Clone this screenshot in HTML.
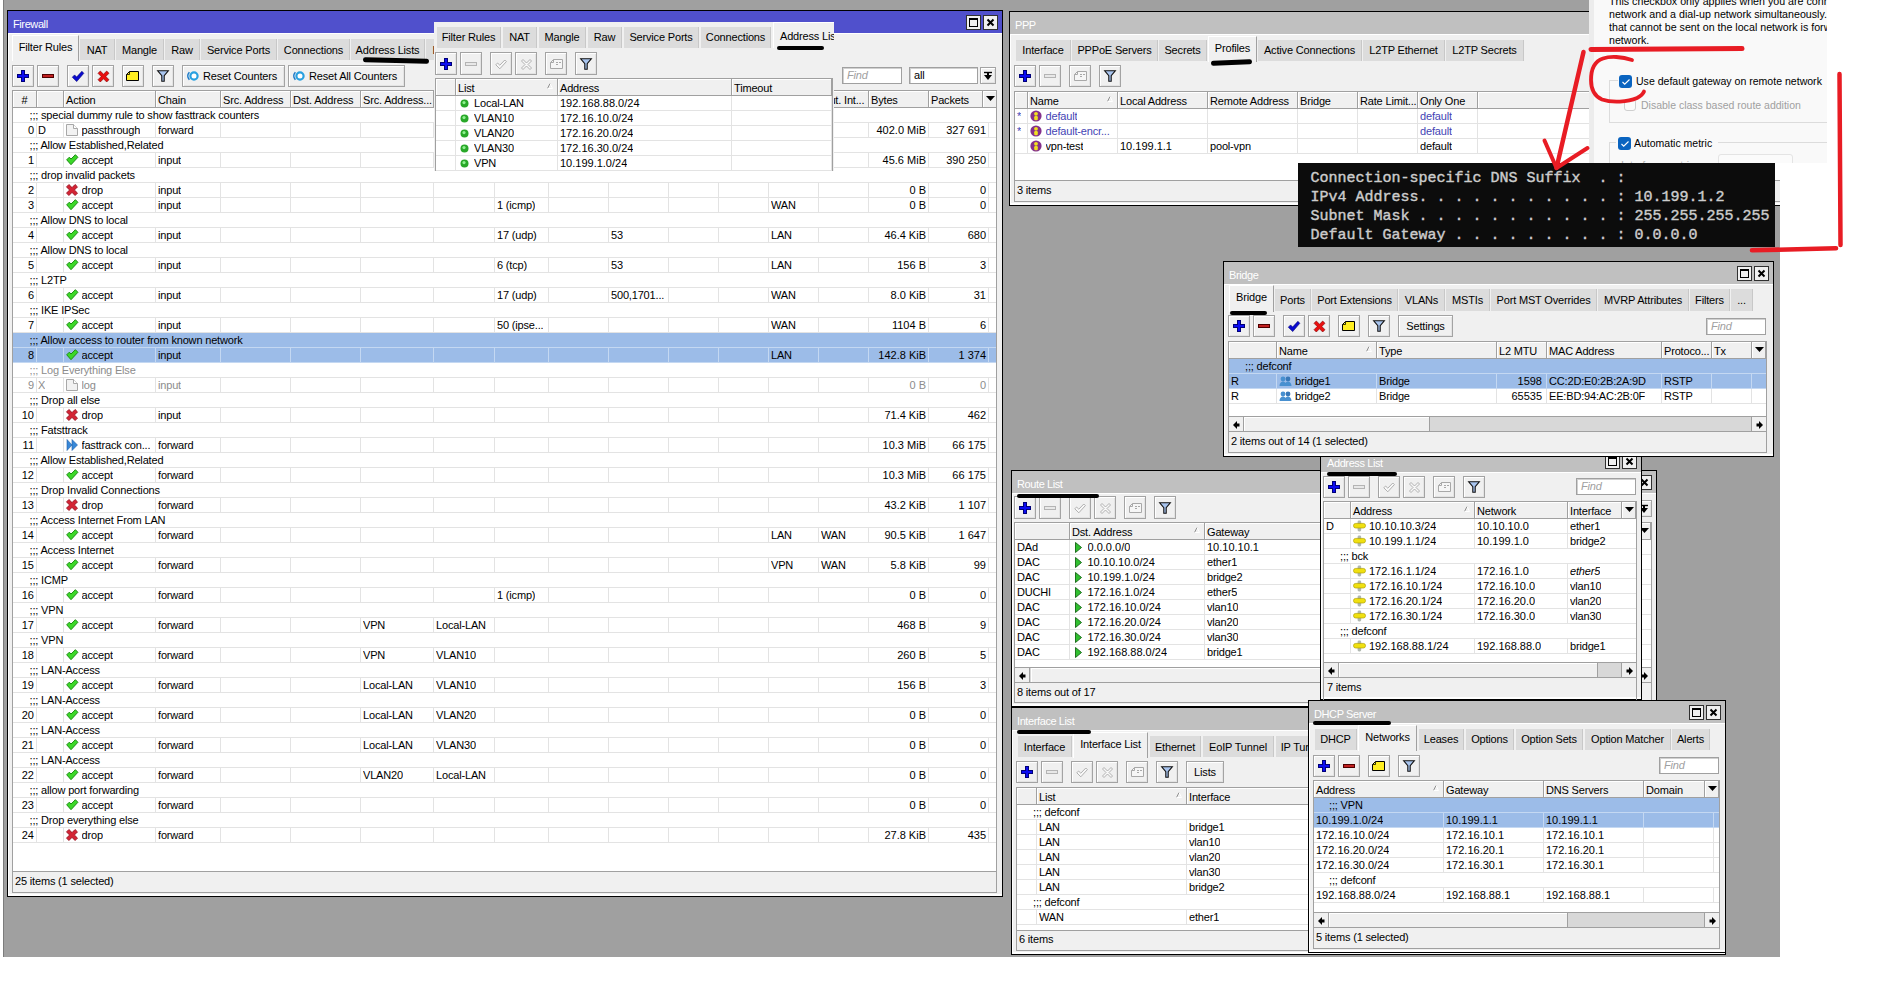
<!DOCTYPE html><html><head><meta charset="utf-8"><title>winbox</title><style>
html,body{margin:0;padding:0}
body{width:1885px;height:991px;background:#fff;position:relative;overflow:hidden;font-family:"Liberation Sans",sans-serif;font-size:11px;color:#000;letter-spacing:-0.17px}
div{position:absolute;box-sizing:border-box}
svg{position:absolute;overflow:visible}
.t{white-space:nowrap;line-height:15px;height:15px}
.n{letter-spacing:0}
.r{text-align:right}
.g{color:#8c8c8c}
.b{background:#f0f0f0;border:1px solid #a3a3a3;box-shadow:inset 1px 1px 0 #fff,inset -1px -1px 0 #e3e3e3}
.w{background:#f0f0f0;border:1px solid #000}
.h{background:#f0f0f0;border-right:1px solid #a0a0a0;border-bottom:1px solid #a0a0a0;box-shadow:inset 1px 1px 0 #fff;white-space:nowrap;overflow:hidden;line-height:18px;padding-left:2px}
.tab{background:#dcdcdc;border-right:1px solid #c8c8c8;white-space:nowrap;text-align:center;line-height:20px}
.tabA{background:#f0f0f0;border-left:1px solid #fff;border-top:1px solid #fff;border-right:1px solid #a0a0a0;white-space:nowrap;text-align:center;line-height:22px}
.tb{background:#fff;border:1px solid #a0a0a0;overflow:hidden}
.row{left:0;height:15px;border-bottom:1px solid #e3e3e3}
.sel{background:#9cbce8;border-bottom:1px solid #c4d8f2}
.vl{top:0;width:1px;background:#e3e3e3}
.fi{background:#fff;border:1px solid #a0a0a0;box-shadow:inset 1px 1px 0 #d0d0d0;line-height:14px;padding-left:4px;white-space:nowrap}
.d{font-size:11.6px;letter-spacing:0;white-space:nowrap;line-height:16px;transform-origin:0 0;color:#000}
.sb{background:#f0f0f0;border-top:1px solid #a0a0a0}
</style></head><body><div style="left:0;top:0;width:1780px;height:957px;overflow:hidden;background:#a0a0a0"><div style="left:0px;top:0px;width:3px;height:957px;background:#fff"></div><div style="left:3px;top:0px;width:1px;height:957px;background:#7c7c7c"></div><div class="w" style="left:7px;top:10px;width:996px;height:887px;"></div><div style="left:8px;top:11px;width:994px;height:22px;background:#5050cc"><div class="t" style="left:5px;top:5.5px;color:#fff;letter-spacing:-.4px">Firewall</div></div><div style="left:8px;top:33px;width:994px;height:1px;background:#fff"></div><div style="left:8px;top:33px;width:1px;height:863px;background:#fff"></div><div style="left:8px;top:894px;width:994px;height:2px;background:#fff"></div><div style="left:966px;top:15px;width:15px;height:15px;background:#f0f0f0;border:1px solid #303030"><svg style="left:2px;top:2px" width="9" height="9" viewBox="0 0 9 9"><rect x=".5" y="1" width="8" height="7.5" fill="none" stroke="#000" stroke-width="1"/><path d="M0 1h9" stroke="#000" stroke-width="2"/></svg></div><div style="left:983px;top:15px;width:15px;height:15px;background:#f0f0f0;border:1px solid #303030"><svg style="left:3px;top:3px" width="7" height="7" viewBox="0 0 7 7"><path d="M.5 .5l6 6M6.5 .5l-6 6" stroke="#000" stroke-width="2"/></svg></div><div class="tabA" style="left:12px;top:35px;width:67px;height:26px">Filter Rules</div><div class="tab" style="left:80px;top:39px;width:35px;height:21px;line-height:22px">NAT</div><div class="tab" style="left:116px;top:39px;width:48px;height:21px;line-height:22px">Mangle</div><div class="tab" style="left:165px;top:39px;width:35px;height:21px;line-height:22px">Raw</div><div class="tab" style="left:201px;top:39px;width:76px;height:21px;line-height:22px">Service Ports</div><div class="tab" style="left:278px;top:39px;width:72px;height:21px;line-height:22px">Connections</div><div class="tab" style="left:351px;top:39px;width:74px;height:21px;line-height:22px">Address Lists</div><div class="tab" style="left:426px;top:39px;width:94px;height:21px;line-height:22px">Layer7 Protocols</div><div class="b" style="left:12px;top:65px;width:22px;height:22px;"><svg style="left:4px;top:4px" width="12" height="12" viewBox="0 0 12 12"><g shape-rendering="crispEdges"><path d="M4 0h4v4h4v4h-4v4h-4v-4h-4v-4h4z" fill="#000078"/><path d="M5 1h2v4h4v2h-4v4h-2v-4h-4v-2h4z" fill="#0c0cf0"/></g></svg></div><div class="b" style="left:37px;top:65px;width:22px;height:22px;"><svg style="left:4px;top:8px" width="12" height="4" viewBox="0 0 12 4"><rect x=".5" y=".5" width="11" height="3" fill="#c02020" stroke="#500000"/></svg></div><div class="b" style="left:67px;top:65px;width:22px;height:22px;"><svg style="left:4px;top:5px" width="12" height="11" viewBox="0 0 12 11"><path d="M.3 6.2l2.3-2.3 2 2.2L9.9.3l1.9 2-7.1 8.3z" fill="#0a0ad0" stroke="#000070" stroke-width=".6"/></svg></div><div class="b" style="left:92px;top:65px;width:22px;height:22px;"><svg style="left:4.5px;top:4.5px" width="11" height="11" viewBox="0 0 11 11"><path d="M2.3 0L5.5 3.2 8.7 0 11 2.3 7.8 5.5 11 8.7 8.7 11 5.5 7.8 2.3 11 0 8.7 3.2 5.5 0 2.3z" fill="#e81010" stroke="#800000" stroke-width=".6"/></svg></div><div class="b" style="left:122px;top:65px;width:22px;height:22px;"><svg style="left:3px;top:5px" width="13" height="10" viewBox="0 0 13 10"><path d="M3.5 .5h9v9h-12v-6z" fill="#ffee20" stroke="#000"/><path d="M.5 3.5h3v-3" fill="none" stroke="#000" stroke-width=".8"/></svg></div><div class="b" style="left:152px;top:65px;width:22px;height:22px;"><svg style="left:4px;top:4px" width="12" height="12" viewBox="0 0 12 12"><path d="M.7 .8h10.6L7.2 5.6v5.6H4.8V5.6z" fill="#a8c4ee" stroke="#101010" stroke-width="1.1"/></svg></div><div class="b" style="left:182px;top:65px;width:103px;height:22px;"><svg style="left:4px;top:5px" width="12" height="10" viewBox="0 0 12 10"><circle cx="7" cy="5" r="3.6" fill="#fff" stroke="#28a0e0" stroke-width="2.2"/><path d="M2.4 1.2A5.5 5.5 0 0 0 2.4 8.8" fill="none" stroke="#1878c8" stroke-width="1.6"/></svg><div class="t" style="left:20px;top:3px">Reset Counters</div></div><div class="b" style="left:288px;top:65px;width:117px;height:22px;"><svg style="left:4px;top:5px" width="12" height="10" viewBox="0 0 12 10"><circle cx="7" cy="5" r="3.6" fill="#fff" stroke="#28a0e0" stroke-width="2.2"/><path d="M2.4 1.2A5.5 5.5 0 0 0 2.4 8.8" fill="none" stroke="#1878c8" stroke-width="1.6"/></svg><div class="t" style="left:20px;top:3px">Reset All Counters</div></div><div class="fi" style="left:842px;top:67px;width:60px;height:17px;color:#a0a0a0;font-style:italic">Find</div><div class="fi" style="left:909px;top:67px;width:69px;height:17px;">all</div><div class="b" style="left:980px;top:67px;width:16px;height:17px;"><svg style="left:3px;top:4px" width="8" height="8" viewBox="0 0 8 8"><path d="M0 .5h8" stroke="#000" stroke-width="1.4"/><path d="M0 3h8L4 8z" fill="#000"/><path d="M3 1h2v3h-2z" fill="#000"/></svg></div><div class="tb" style="left:12px;top:90px;width:985px;height:782px;"><div class="h" style="left:0px;top:0;width:24px;height:17px;text-align:center;padding:0">#</div><div class="h" style="left:24px;top:0;width:27px;height:17px;"></div><div class="h" style="left:51px;top:0;width:92px;height:17px;">Action</div><div class="h" style="left:143px;top:0;width:65px;height:17px;">Chain</div><div class="h" style="left:208px;top:0;width:70px;height:17px;">Src. Address</div><div class="h" style="left:278px;top:0;width:70px;height:17px;">Dst. Address</div><div class="h" style="left:348px;top:0;width:73px;height:17px;">Src. Address...</div><div class="h" style="left:421px;top:0;width:61px;height:17px;">Dst. Address...</div><div class="h" style="left:482px;top:0;width:54px;height:17px;">Protocol</div><div class="h" style="left:536px;top:0;width:60px;height:17px;">Src. Port</div><div class="h" style="left:596px;top:0;width:60px;height:17px;">Dst. Port</div><div class="h" style="left:656px;top:0;width:50px;height:17px;">Any. Port</div><div class="h" style="left:706px;top:0;width:50px;height:17px;">In. Inter...</div><div class="h" style="left:756px;top:0;width:50px;height:17px;">In. Int...</div><div class="h" style="left:806px;top:0;width:50px;height:17px;text-indent:0px">Out. Int...</div><div class="h" style="left:856px;top:0;width:60px;height:17px;">Bytes</div><div class="h" style="left:916px;top:0;width:54px;height:17px;">Packets</div><div class="h" style="left:970px;top:0;width:14px;height:17px;padding:0"><svg style="left:2.5px;top:5px" width="9" height="5" viewBox="0 0 9 5"><path d="M0 0h9L4.5 5z" fill="#000"/></svg></div><div class="row" style="top:17px;width:983px"><div class="t" style="left:16.5px;top:0">;;; special dummy rule to show fasttrack counters</div></div><div class="row" style="top:32px;width:983px"><div class="vl" style="left:23px;height:14px;background:#e3e3e3"></div><div class="vl" style="left:50px;height:14px;background:#e3e3e3"></div><div class="vl" style="left:142px;height:14px;background:#e3e3e3"></div><div class="vl" style="left:207px;height:14px;background:#e3e3e3"></div><div class="vl" style="left:277px;height:14px;background:#e3e3e3"></div><div class="vl" style="left:347px;height:14px;background:#e3e3e3"></div><div class="vl" style="left:420px;height:14px;background:#e3e3e3"></div><div class="vl" style="left:481px;height:14px;background:#e3e3e3"></div><div class="vl" style="left:535px;height:14px;background:#e3e3e3"></div><div class="vl" style="left:595px;height:14px;background:#e3e3e3"></div><div class="vl" style="left:655px;height:14px;background:#e3e3e3"></div><div class="vl" style="left:705px;height:14px;background:#e3e3e3"></div><div class="vl" style="left:755px;height:14px;background:#e3e3e3"></div><div class="vl" style="left:805px;height:14px;background:#e3e3e3"></div><div class="vl" style="left:855px;height:14px;background:#e3e3e3"></div><div class="vl" style="left:915px;height:14px;background:#e3e3e3"></div><div class="vl" style="left:975px;height:14px;background:#e3e3e3"></div><div class="t n r" style="left:0px;width:21px;top:0;">0</div><svg style="left:53px;top:1px" width="12" height="12" viewBox="0 0 12 12"><path d="M.5 .5h7l4 4v7h-11z" fill="#f2f2f2" stroke="#a8a8a8"/><path d="M7.5 .5v4h4" fill="#fff" stroke="#a8a8a8"/></svg><div class="t" style="left:68.5px;top:0;max-width:73.5px;overflow:hidden;">passthrough</div><div class="t" style="left:145px;top:0;max-width:62px;overflow:hidden;">forward</div><div class="t n r" style="left:856px;width:57px;top:0;">402.0 MiB</div><div class="t n r" style="left:916px;width:57px;top:0;">327 691</div><div class="t" style="left:25px;top:0;max-width:25px;overflow:hidden;">D</div></div><div class="row" style="top:47px;width:983px"><div class="t" style="left:16.5px;top:0">;;; Allow Established,Related</div></div><div class="row" style="top:62px;width:983px"><div class="vl" style="left:23px;height:14px;background:#e3e3e3"></div><div class="vl" style="left:50px;height:14px;background:#e3e3e3"></div><div class="vl" style="left:142px;height:14px;background:#e3e3e3"></div><div class="vl" style="left:207px;height:14px;background:#e3e3e3"></div><div class="vl" style="left:277px;height:14px;background:#e3e3e3"></div><div class="vl" style="left:347px;height:14px;background:#e3e3e3"></div><div class="vl" style="left:420px;height:14px;background:#e3e3e3"></div><div class="vl" style="left:481px;height:14px;background:#e3e3e3"></div><div class="vl" style="left:535px;height:14px;background:#e3e3e3"></div><div class="vl" style="left:595px;height:14px;background:#e3e3e3"></div><div class="vl" style="left:655px;height:14px;background:#e3e3e3"></div><div class="vl" style="left:705px;height:14px;background:#e3e3e3"></div><div class="vl" style="left:755px;height:14px;background:#e3e3e3"></div><div class="vl" style="left:805px;height:14px;background:#e3e3e3"></div><div class="vl" style="left:855px;height:14px;background:#e3e3e3"></div><div class="vl" style="left:915px;height:14px;background:#e3e3e3"></div><div class="vl" style="left:975px;height:14px;background:#e3e3e3"></div><div class="t n r" style="left:0px;width:21px;top:0;">1</div><svg style="left:53px;top:1px" width="13" height="11" viewBox="0 0 13 11"><path d="M.7 5.8l2.6-2.6 1.7 1.8L9.4 .7l2.5 2.6-6.9 7.4z" fill="#3cd828" stroke="#1c8c14" stroke-width="1"/></svg><div class="t" style="left:68.5px;top:0;max-width:73.5px;overflow:hidden;">accept</div><div class="t" style="left:145px;top:0;max-width:62px;overflow:hidden;">input</div><div class="t n r" style="left:856px;width:57px;top:0;">45.6 MiB</div><div class="t n r" style="left:916px;width:57px;top:0;">390 250</div></div><div class="row" style="top:77px;width:983px"><div class="t" style="left:16.5px;top:0">;;; drop invalid packets</div></div><div class="row" style="top:92px;width:983px"><div class="vl" style="left:23px;height:14px;background:#e3e3e3"></div><div class="vl" style="left:50px;height:14px;background:#e3e3e3"></div><div class="vl" style="left:142px;height:14px;background:#e3e3e3"></div><div class="vl" style="left:207px;height:14px;background:#e3e3e3"></div><div class="vl" style="left:277px;height:14px;background:#e3e3e3"></div><div class="vl" style="left:347px;height:14px;background:#e3e3e3"></div><div class="vl" style="left:420px;height:14px;background:#e3e3e3"></div><div class="vl" style="left:481px;height:14px;background:#e3e3e3"></div><div class="vl" style="left:535px;height:14px;background:#e3e3e3"></div><div class="vl" style="left:595px;height:14px;background:#e3e3e3"></div><div class="vl" style="left:655px;height:14px;background:#e3e3e3"></div><div class="vl" style="left:705px;height:14px;background:#e3e3e3"></div><div class="vl" style="left:755px;height:14px;background:#e3e3e3"></div><div class="vl" style="left:805px;height:14px;background:#e3e3e3"></div><div class="vl" style="left:855px;height:14px;background:#e3e3e3"></div><div class="vl" style="left:915px;height:14px;background:#e3e3e3"></div><div class="vl" style="left:975px;height:14px;background:#e3e3e3"></div><div class="t n r" style="left:0px;width:21px;top:0;">2</div><svg style="left:53px;top:1px" width="12" height="12" viewBox="0 0 12 12"><path d="M2.9 .5L6 3.6 9.1 .5 11.5 2.9 8.4 6 11.5 9.1 9.1 11.5 6 8.4 2.9 11.5 .5 9.1 3.6 6 .5 2.9z" fill="#d42434" stroke="#981424" stroke-width=".9"/></svg><div class="t" style="left:68.5px;top:0;max-width:73.5px;overflow:hidden;">drop</div><div class="t" style="left:145px;top:0;max-width:62px;overflow:hidden;">input</div><div class="t n r" style="left:856px;width:57px;top:0;">0 B</div><div class="t n r" style="left:916px;width:57px;top:0;">0</div></div><div class="row" style="top:107px;width:983px"><div class="vl" style="left:23px;height:14px;background:#e3e3e3"></div><div class="vl" style="left:50px;height:14px;background:#e3e3e3"></div><div class="vl" style="left:142px;height:14px;background:#e3e3e3"></div><div class="vl" style="left:207px;height:14px;background:#e3e3e3"></div><div class="vl" style="left:277px;height:14px;background:#e3e3e3"></div><div class="vl" style="left:347px;height:14px;background:#e3e3e3"></div><div class="vl" style="left:420px;height:14px;background:#e3e3e3"></div><div class="vl" style="left:481px;height:14px;background:#e3e3e3"></div><div class="vl" style="left:535px;height:14px;background:#e3e3e3"></div><div class="vl" style="left:595px;height:14px;background:#e3e3e3"></div><div class="vl" style="left:655px;height:14px;background:#e3e3e3"></div><div class="vl" style="left:705px;height:14px;background:#e3e3e3"></div><div class="vl" style="left:755px;height:14px;background:#e3e3e3"></div><div class="vl" style="left:805px;height:14px;background:#e3e3e3"></div><div class="vl" style="left:855px;height:14px;background:#e3e3e3"></div><div class="vl" style="left:915px;height:14px;background:#e3e3e3"></div><div class="vl" style="left:975px;height:14px;background:#e3e3e3"></div><div class="t n r" style="left:0px;width:21px;top:0;">3</div><svg style="left:53px;top:1px" width="13" height="11" viewBox="0 0 13 11"><path d="M.7 5.8l2.6-2.6 1.7 1.8L9.4 .7l2.5 2.6-6.9 7.4z" fill="#3cd828" stroke="#1c8c14" stroke-width="1"/></svg><div class="t" style="left:68.5px;top:0;max-width:73.5px;overflow:hidden;">accept</div><div class="t" style="left:145px;top:0;max-width:62px;overflow:hidden;">input</div><div class="t n r" style="left:856px;width:57px;top:0;">0 B</div><div class="t n r" style="left:916px;width:57px;top:0;">0</div><div class="t" style="left:484px;top:0;max-width:51px;overflow:hidden;">1 (icmp)</div><div class="t" style="left:758px;top:0;max-width:47px;overflow:hidden;">WAN</div></div><div class="row" style="top:122px;width:983px"><div class="t" style="left:16.5px;top:0">;;; Allow DNS to local</div></div><div class="row" style="top:137px;width:983px"><div class="vl" style="left:23px;height:14px;background:#e3e3e3"></div><div class="vl" style="left:50px;height:14px;background:#e3e3e3"></div><div class="vl" style="left:142px;height:14px;background:#e3e3e3"></div><div class="vl" style="left:207px;height:14px;background:#e3e3e3"></div><div class="vl" style="left:277px;height:14px;background:#e3e3e3"></div><div class="vl" style="left:347px;height:14px;background:#e3e3e3"></div><div class="vl" style="left:420px;height:14px;background:#e3e3e3"></div><div class="vl" style="left:481px;height:14px;background:#e3e3e3"></div><div class="vl" style="left:535px;height:14px;background:#e3e3e3"></div><div class="vl" style="left:595px;height:14px;background:#e3e3e3"></div><div class="vl" style="left:655px;height:14px;background:#e3e3e3"></div><div class="vl" style="left:705px;height:14px;background:#e3e3e3"></div><div class="vl" style="left:755px;height:14px;background:#e3e3e3"></div><div class="vl" style="left:805px;height:14px;background:#e3e3e3"></div><div class="vl" style="left:855px;height:14px;background:#e3e3e3"></div><div class="vl" style="left:915px;height:14px;background:#e3e3e3"></div><div class="vl" style="left:975px;height:14px;background:#e3e3e3"></div><div class="t n r" style="left:0px;width:21px;top:0;">4</div><svg style="left:53px;top:1px" width="13" height="11" viewBox="0 0 13 11"><path d="M.7 5.8l2.6-2.6 1.7 1.8L9.4 .7l2.5 2.6-6.9 7.4z" fill="#3cd828" stroke="#1c8c14" stroke-width="1"/></svg><div class="t" style="left:68.5px;top:0;max-width:73.5px;overflow:hidden;">accept</div><div class="t" style="left:145px;top:0;max-width:62px;overflow:hidden;">input</div><div class="t n r" style="left:856px;width:57px;top:0;">46.4 KiB</div><div class="t n r" style="left:916px;width:57px;top:0;">680</div><div class="t" style="left:484px;top:0;max-width:51px;overflow:hidden;">17 (udp)</div><div class="t" style="left:598px;top:0;max-width:57px;overflow:hidden;">53</div><div class="t" style="left:758px;top:0;max-width:47px;overflow:hidden;">LAN</div></div><div class="row" style="top:152px;width:983px"><div class="t" style="left:16.5px;top:0">;;; Allow DNS to local</div></div><div class="row" style="top:167px;width:983px"><div class="vl" style="left:23px;height:14px;background:#e3e3e3"></div><div class="vl" style="left:50px;height:14px;background:#e3e3e3"></div><div class="vl" style="left:142px;height:14px;background:#e3e3e3"></div><div class="vl" style="left:207px;height:14px;background:#e3e3e3"></div><div class="vl" style="left:277px;height:14px;background:#e3e3e3"></div><div class="vl" style="left:347px;height:14px;background:#e3e3e3"></div><div class="vl" style="left:420px;height:14px;background:#e3e3e3"></div><div class="vl" style="left:481px;height:14px;background:#e3e3e3"></div><div class="vl" style="left:535px;height:14px;background:#e3e3e3"></div><div class="vl" style="left:595px;height:14px;background:#e3e3e3"></div><div class="vl" style="left:655px;height:14px;background:#e3e3e3"></div><div class="vl" style="left:705px;height:14px;background:#e3e3e3"></div><div class="vl" style="left:755px;height:14px;background:#e3e3e3"></div><div class="vl" style="left:805px;height:14px;background:#e3e3e3"></div><div class="vl" style="left:855px;height:14px;background:#e3e3e3"></div><div class="vl" style="left:915px;height:14px;background:#e3e3e3"></div><div class="vl" style="left:975px;height:14px;background:#e3e3e3"></div><div class="t n r" style="left:0px;width:21px;top:0;">5</div><svg style="left:53px;top:1px" width="13" height="11" viewBox="0 0 13 11"><path d="M.7 5.8l2.6-2.6 1.7 1.8L9.4 .7l2.5 2.6-6.9 7.4z" fill="#3cd828" stroke="#1c8c14" stroke-width="1"/></svg><div class="t" style="left:68.5px;top:0;max-width:73.5px;overflow:hidden;">accept</div><div class="t" style="left:145px;top:0;max-width:62px;overflow:hidden;">input</div><div class="t n r" style="left:856px;width:57px;top:0;">156 B</div><div class="t n r" style="left:916px;width:57px;top:0;">3</div><div class="t" style="left:484px;top:0;max-width:51px;overflow:hidden;">6 (tcp)</div><div class="t" style="left:598px;top:0;max-width:57px;overflow:hidden;">53</div><div class="t" style="left:758px;top:0;max-width:47px;overflow:hidden;">LAN</div></div><div class="row" style="top:182px;width:983px"><div class="t" style="left:16.5px;top:0">;;; L2TP</div></div><div class="row" style="top:197px;width:983px"><div class="vl" style="left:23px;height:14px;background:#e3e3e3"></div><div class="vl" style="left:50px;height:14px;background:#e3e3e3"></div><div class="vl" style="left:142px;height:14px;background:#e3e3e3"></div><div class="vl" style="left:207px;height:14px;background:#e3e3e3"></div><div class="vl" style="left:277px;height:14px;background:#e3e3e3"></div><div class="vl" style="left:347px;height:14px;background:#e3e3e3"></div><div class="vl" style="left:420px;height:14px;background:#e3e3e3"></div><div class="vl" style="left:481px;height:14px;background:#e3e3e3"></div><div class="vl" style="left:535px;height:14px;background:#e3e3e3"></div><div class="vl" style="left:595px;height:14px;background:#e3e3e3"></div><div class="vl" style="left:655px;height:14px;background:#e3e3e3"></div><div class="vl" style="left:705px;height:14px;background:#e3e3e3"></div><div class="vl" style="left:755px;height:14px;background:#e3e3e3"></div><div class="vl" style="left:805px;height:14px;background:#e3e3e3"></div><div class="vl" style="left:855px;height:14px;background:#e3e3e3"></div><div class="vl" style="left:915px;height:14px;background:#e3e3e3"></div><div class="vl" style="left:975px;height:14px;background:#e3e3e3"></div><div class="t n r" style="left:0px;width:21px;top:0;">6</div><svg style="left:53px;top:1px" width="13" height="11" viewBox="0 0 13 11"><path d="M.7 5.8l2.6-2.6 1.7 1.8L9.4 .7l2.5 2.6-6.9 7.4z" fill="#3cd828" stroke="#1c8c14" stroke-width="1"/></svg><div class="t" style="left:68.5px;top:0;max-width:73.5px;overflow:hidden;">accept</div><div class="t" style="left:145px;top:0;max-width:62px;overflow:hidden;">input</div><div class="t n r" style="left:856px;width:57px;top:0;">8.0 KiB</div><div class="t n r" style="left:916px;width:57px;top:0;">31</div><div class="t" style="left:484px;top:0;max-width:51px;overflow:hidden;">17 (udp)</div><div class="t" style="left:598px;top:0;max-width:57px;overflow:hidden;">500,1701...</div><div class="t" style="left:758px;top:0;max-width:47px;overflow:hidden;">WAN</div></div><div class="row" style="top:212px;width:983px"><div class="t" style="left:16.5px;top:0">;;; IKE IPSec</div></div><div class="row" style="top:227px;width:983px"><div class="vl" style="left:23px;height:14px;background:#e3e3e3"></div><div class="vl" style="left:50px;height:14px;background:#e3e3e3"></div><div class="vl" style="left:142px;height:14px;background:#e3e3e3"></div><div class="vl" style="left:207px;height:14px;background:#e3e3e3"></div><div class="vl" style="left:277px;height:14px;background:#e3e3e3"></div><div class="vl" style="left:347px;height:14px;background:#e3e3e3"></div><div class="vl" style="left:420px;height:14px;background:#e3e3e3"></div><div class="vl" style="left:481px;height:14px;background:#e3e3e3"></div><div class="vl" style="left:535px;height:14px;background:#e3e3e3"></div><div class="vl" style="left:595px;height:14px;background:#e3e3e3"></div><div class="vl" style="left:655px;height:14px;background:#e3e3e3"></div><div class="vl" style="left:705px;height:14px;background:#e3e3e3"></div><div class="vl" style="left:755px;height:14px;background:#e3e3e3"></div><div class="vl" style="left:805px;height:14px;background:#e3e3e3"></div><div class="vl" style="left:855px;height:14px;background:#e3e3e3"></div><div class="vl" style="left:915px;height:14px;background:#e3e3e3"></div><div class="vl" style="left:975px;height:14px;background:#e3e3e3"></div><div class="t n r" style="left:0px;width:21px;top:0;">7</div><svg style="left:53px;top:1px" width="13" height="11" viewBox="0 0 13 11"><path d="M.7 5.8l2.6-2.6 1.7 1.8L9.4 .7l2.5 2.6-6.9 7.4z" fill="#3cd828" stroke="#1c8c14" stroke-width="1"/></svg><div class="t" style="left:68.5px;top:0;max-width:73.5px;overflow:hidden;">accept</div><div class="t" style="left:145px;top:0;max-width:62px;overflow:hidden;">input</div><div class="t n r" style="left:856px;width:57px;top:0;">1104 B</div><div class="t n r" style="left:916px;width:57px;top:0;">6</div><div class="t" style="left:484px;top:0;max-width:51px;overflow:hidden;">50 (ipse...</div><div class="t" style="left:758px;top:0;max-width:47px;overflow:hidden;">WAN</div></div><div class="row sel" style="top:242px;width:983px"><div class="t" style="left:16.5px;top:0">;;; Allow access to router from known network</div></div><div class="row sel" style="top:257px;width:983px"><div class="vl" style="left:23px;height:14px;background:#c4d8f2"></div><div class="vl" style="left:50px;height:14px;background:#c4d8f2"></div><div class="vl" style="left:142px;height:14px;background:#c4d8f2"></div><div class="vl" style="left:207px;height:14px;background:#c4d8f2"></div><div class="vl" style="left:277px;height:14px;background:#c4d8f2"></div><div class="vl" style="left:347px;height:14px;background:#c4d8f2"></div><div class="vl" style="left:420px;height:14px;background:#c4d8f2"></div><div class="vl" style="left:481px;height:14px;background:#c4d8f2"></div><div class="vl" style="left:535px;height:14px;background:#c4d8f2"></div><div class="vl" style="left:595px;height:14px;background:#c4d8f2"></div><div class="vl" style="left:655px;height:14px;background:#c4d8f2"></div><div class="vl" style="left:705px;height:14px;background:#c4d8f2"></div><div class="vl" style="left:755px;height:14px;background:#c4d8f2"></div><div class="vl" style="left:805px;height:14px;background:#c4d8f2"></div><div class="vl" style="left:855px;height:14px;background:#c4d8f2"></div><div class="vl" style="left:915px;height:14px;background:#c4d8f2"></div><div class="vl" style="left:975px;height:14px;background:#c4d8f2"></div><div class="t n r" style="left:0px;width:21px;top:0;">8</div><svg style="left:53px;top:1px" width="13" height="11" viewBox="0 0 13 11"><path d="M.7 5.8l2.6-2.6 1.7 1.8L9.4 .7l2.5 2.6-6.9 7.4z" fill="#3cd828" stroke="#1c8c14" stroke-width="1"/></svg><div class="t" style="left:68.5px;top:0;max-width:73.5px;overflow:hidden;">accept</div><div class="t" style="left:145px;top:0;max-width:62px;overflow:hidden;">input</div><div class="t n r" style="left:856px;width:57px;top:0;">142.8 KiB</div><div class="t n r" style="left:916px;width:57px;top:0;">1 374</div><div class="t" style="left:758px;top:0;max-width:47px;overflow:hidden;">LAN</div></div><div class="row" style="top:272px;width:983px"><div class="t g" style="left:16.5px;top:0">;;; Log Everything Else</div></div><div class="row" style="top:287px;width:983px"><div class="vl" style="left:23px;height:14px;background:#e3e3e3"></div><div class="vl" style="left:50px;height:14px;background:#e3e3e3"></div><div class="vl" style="left:142px;height:14px;background:#e3e3e3"></div><div class="vl" style="left:207px;height:14px;background:#e3e3e3"></div><div class="vl" style="left:277px;height:14px;background:#e3e3e3"></div><div class="vl" style="left:347px;height:14px;background:#e3e3e3"></div><div class="vl" style="left:420px;height:14px;background:#e3e3e3"></div><div class="vl" style="left:481px;height:14px;background:#e3e3e3"></div><div class="vl" style="left:535px;height:14px;background:#e3e3e3"></div><div class="vl" style="left:595px;height:14px;background:#e3e3e3"></div><div class="vl" style="left:655px;height:14px;background:#e3e3e3"></div><div class="vl" style="left:705px;height:14px;background:#e3e3e3"></div><div class="vl" style="left:755px;height:14px;background:#e3e3e3"></div><div class="vl" style="left:805px;height:14px;background:#e3e3e3"></div><div class="vl" style="left:855px;height:14px;background:#e3e3e3"></div><div class="vl" style="left:915px;height:14px;background:#e3e3e3"></div><div class="vl" style="left:975px;height:14px;background:#e3e3e3"></div><div class="t g n r" style="left:0px;width:21px;top:0;">9</div><svg style="left:53px;top:1px" width="12" height="12" viewBox="0 0 12 12"><path d="M.5 .5h7l4 4v7h-11z" fill="#f2f2f2" stroke="#a8a8a8"/><path d="M7.5 .5v4h4" fill="#fff" stroke="#a8a8a8"/></svg><div class="t g" style="left:68.5px;top:0;max-width:73.5px;overflow:hidden;">log</div><div class="t g" style="left:145px;top:0;max-width:62px;overflow:hidden;">input</div><div class="t g n r" style="left:856px;width:57px;top:0;">0 B</div><div class="t g n r" style="left:916px;width:57px;top:0;">0</div><div class="t g" style="left:25px;top:0;max-width:25px;overflow:hidden;">X</div></div><div class="row" style="top:302px;width:983px"><div class="t" style="left:16.5px;top:0">;;; Drop all else</div></div><div class="row" style="top:317px;width:983px"><div class="vl" style="left:23px;height:14px;background:#e3e3e3"></div><div class="vl" style="left:50px;height:14px;background:#e3e3e3"></div><div class="vl" style="left:142px;height:14px;background:#e3e3e3"></div><div class="vl" style="left:207px;height:14px;background:#e3e3e3"></div><div class="vl" style="left:277px;height:14px;background:#e3e3e3"></div><div class="vl" style="left:347px;height:14px;background:#e3e3e3"></div><div class="vl" style="left:420px;height:14px;background:#e3e3e3"></div><div class="vl" style="left:481px;height:14px;background:#e3e3e3"></div><div class="vl" style="left:535px;height:14px;background:#e3e3e3"></div><div class="vl" style="left:595px;height:14px;background:#e3e3e3"></div><div class="vl" style="left:655px;height:14px;background:#e3e3e3"></div><div class="vl" style="left:705px;height:14px;background:#e3e3e3"></div><div class="vl" style="left:755px;height:14px;background:#e3e3e3"></div><div class="vl" style="left:805px;height:14px;background:#e3e3e3"></div><div class="vl" style="left:855px;height:14px;background:#e3e3e3"></div><div class="vl" style="left:915px;height:14px;background:#e3e3e3"></div><div class="vl" style="left:975px;height:14px;background:#e3e3e3"></div><div class="t n r" style="left:0px;width:21px;top:0;">10</div><svg style="left:53px;top:1px" width="12" height="12" viewBox="0 0 12 12"><path d="M2.9 .5L6 3.6 9.1 .5 11.5 2.9 8.4 6 11.5 9.1 9.1 11.5 6 8.4 2.9 11.5 .5 9.1 3.6 6 .5 2.9z" fill="#d42434" stroke="#981424" stroke-width=".9"/></svg><div class="t" style="left:68.5px;top:0;max-width:73.5px;overflow:hidden;">drop</div><div class="t" style="left:145px;top:0;max-width:62px;overflow:hidden;">input</div><div class="t n r" style="left:856px;width:57px;top:0;">71.4 KiB</div><div class="t n r" style="left:916px;width:57px;top:0;">462</div></div><div class="row" style="top:332px;width:983px"><div class="t" style="left:16.5px;top:0">;;; Fatsttrack</div></div><div class="row" style="top:347px;width:983px"><div class="vl" style="left:23px;height:14px;background:#e3e3e3"></div><div class="vl" style="left:50px;height:14px;background:#e3e3e3"></div><div class="vl" style="left:142px;height:14px;background:#e3e3e3"></div><div class="vl" style="left:207px;height:14px;background:#e3e3e3"></div><div class="vl" style="left:277px;height:14px;background:#e3e3e3"></div><div class="vl" style="left:347px;height:14px;background:#e3e3e3"></div><div class="vl" style="left:420px;height:14px;background:#e3e3e3"></div><div class="vl" style="left:481px;height:14px;background:#e3e3e3"></div><div class="vl" style="left:535px;height:14px;background:#e3e3e3"></div><div class="vl" style="left:595px;height:14px;background:#e3e3e3"></div><div class="vl" style="left:655px;height:14px;background:#e3e3e3"></div><div class="vl" style="left:705px;height:14px;background:#e3e3e3"></div><div class="vl" style="left:755px;height:14px;background:#e3e3e3"></div><div class="vl" style="left:805px;height:14px;background:#e3e3e3"></div><div class="vl" style="left:855px;height:14px;background:#e3e3e3"></div><div class="vl" style="left:915px;height:14px;background:#e3e3e3"></div><div class="vl" style="left:975px;height:14px;background:#e3e3e3"></div><div class="t n r" style="left:0px;width:21px;top:0;">11</div><svg style="left:53px;top:1px" width="12" height="12" viewBox="0 0 12 12"><path d="M1 .5L6 6 1 11.5zM6 .5L11.5 6 6 11.5z" fill="#3888d8" stroke="#2060a8" stroke-width=".6"/></svg><div class="t" style="left:68.5px;top:0;max-width:73.5px;overflow:hidden;">fasttrack con...</div><div class="t" style="left:145px;top:0;max-width:62px;overflow:hidden;">forward</div><div class="t n r" style="left:856px;width:57px;top:0;">10.3 MiB</div><div class="t n r" style="left:916px;width:57px;top:0;">66 175</div></div><div class="row" style="top:362px;width:983px"><div class="t" style="left:16.5px;top:0">;;; Allow Established,Related</div></div><div class="row" style="top:377px;width:983px"><div class="vl" style="left:23px;height:14px;background:#e3e3e3"></div><div class="vl" style="left:50px;height:14px;background:#e3e3e3"></div><div class="vl" style="left:142px;height:14px;background:#e3e3e3"></div><div class="vl" style="left:207px;height:14px;background:#e3e3e3"></div><div class="vl" style="left:277px;height:14px;background:#e3e3e3"></div><div class="vl" style="left:347px;height:14px;background:#e3e3e3"></div><div class="vl" style="left:420px;height:14px;background:#e3e3e3"></div><div class="vl" style="left:481px;height:14px;background:#e3e3e3"></div><div class="vl" style="left:535px;height:14px;background:#e3e3e3"></div><div class="vl" style="left:595px;height:14px;background:#e3e3e3"></div><div class="vl" style="left:655px;height:14px;background:#e3e3e3"></div><div class="vl" style="left:705px;height:14px;background:#e3e3e3"></div><div class="vl" style="left:755px;height:14px;background:#e3e3e3"></div><div class="vl" style="left:805px;height:14px;background:#e3e3e3"></div><div class="vl" style="left:855px;height:14px;background:#e3e3e3"></div><div class="vl" style="left:915px;height:14px;background:#e3e3e3"></div><div class="vl" style="left:975px;height:14px;background:#e3e3e3"></div><div class="t n r" style="left:0px;width:21px;top:0;">12</div><svg style="left:53px;top:1px" width="13" height="11" viewBox="0 0 13 11"><path d="M.7 5.8l2.6-2.6 1.7 1.8L9.4 .7l2.5 2.6-6.9 7.4z" fill="#3cd828" stroke="#1c8c14" stroke-width="1"/></svg><div class="t" style="left:68.5px;top:0;max-width:73.5px;overflow:hidden;">accept</div><div class="t" style="left:145px;top:0;max-width:62px;overflow:hidden;">forward</div><div class="t n r" style="left:856px;width:57px;top:0;">10.3 MiB</div><div class="t n r" style="left:916px;width:57px;top:0;">66 175</div></div><div class="row" style="top:392px;width:983px"><div class="t" style="left:16.5px;top:0">;;; Drop Invalid Connections</div></div><div class="row" style="top:407px;width:983px"><div class="vl" style="left:23px;height:14px;background:#e3e3e3"></div><div class="vl" style="left:50px;height:14px;background:#e3e3e3"></div><div class="vl" style="left:142px;height:14px;background:#e3e3e3"></div><div class="vl" style="left:207px;height:14px;background:#e3e3e3"></div><div class="vl" style="left:277px;height:14px;background:#e3e3e3"></div><div class="vl" style="left:347px;height:14px;background:#e3e3e3"></div><div class="vl" style="left:420px;height:14px;background:#e3e3e3"></div><div class="vl" style="left:481px;height:14px;background:#e3e3e3"></div><div class="vl" style="left:535px;height:14px;background:#e3e3e3"></div><div class="vl" style="left:595px;height:14px;background:#e3e3e3"></div><div class="vl" style="left:655px;height:14px;background:#e3e3e3"></div><div class="vl" style="left:705px;height:14px;background:#e3e3e3"></div><div class="vl" style="left:755px;height:14px;background:#e3e3e3"></div><div class="vl" style="left:805px;height:14px;background:#e3e3e3"></div><div class="vl" style="left:855px;height:14px;background:#e3e3e3"></div><div class="vl" style="left:915px;height:14px;background:#e3e3e3"></div><div class="vl" style="left:975px;height:14px;background:#e3e3e3"></div><div class="t n r" style="left:0px;width:21px;top:0;">13</div><svg style="left:53px;top:1px" width="12" height="12" viewBox="0 0 12 12"><path d="M2.9 .5L6 3.6 9.1 .5 11.5 2.9 8.4 6 11.5 9.1 9.1 11.5 6 8.4 2.9 11.5 .5 9.1 3.6 6 .5 2.9z" fill="#d42434" stroke="#981424" stroke-width=".9"/></svg><div class="t" style="left:68.5px;top:0;max-width:73.5px;overflow:hidden;">drop</div><div class="t" style="left:145px;top:0;max-width:62px;overflow:hidden;">forward</div><div class="t n r" style="left:856px;width:57px;top:0;">43.2 KiB</div><div class="t n r" style="left:916px;width:57px;top:0;">1 107</div></div><div class="row" style="top:422px;width:983px"><div class="t" style="left:16.5px;top:0">;;; Access Internet From LAN</div></div><div class="row" style="top:437px;width:983px"><div class="vl" style="left:23px;height:14px;background:#e3e3e3"></div><div class="vl" style="left:50px;height:14px;background:#e3e3e3"></div><div class="vl" style="left:142px;height:14px;background:#e3e3e3"></div><div class="vl" style="left:207px;height:14px;background:#e3e3e3"></div><div class="vl" style="left:277px;height:14px;background:#e3e3e3"></div><div class="vl" style="left:347px;height:14px;background:#e3e3e3"></div><div class="vl" style="left:420px;height:14px;background:#e3e3e3"></div><div class="vl" style="left:481px;height:14px;background:#e3e3e3"></div><div class="vl" style="left:535px;height:14px;background:#e3e3e3"></div><div class="vl" style="left:595px;height:14px;background:#e3e3e3"></div><div class="vl" style="left:655px;height:14px;background:#e3e3e3"></div><div class="vl" style="left:705px;height:14px;background:#e3e3e3"></div><div class="vl" style="left:755px;height:14px;background:#e3e3e3"></div><div class="vl" style="left:805px;height:14px;background:#e3e3e3"></div><div class="vl" style="left:855px;height:14px;background:#e3e3e3"></div><div class="vl" style="left:915px;height:14px;background:#e3e3e3"></div><div class="vl" style="left:975px;height:14px;background:#e3e3e3"></div><div class="t n r" style="left:0px;width:21px;top:0;">14</div><svg style="left:53px;top:1px" width="13" height="11" viewBox="0 0 13 11"><path d="M.7 5.8l2.6-2.6 1.7 1.8L9.4 .7l2.5 2.6-6.9 7.4z" fill="#3cd828" stroke="#1c8c14" stroke-width="1"/></svg><div class="t" style="left:68.5px;top:0;max-width:73.5px;overflow:hidden;">accept</div><div class="t" style="left:145px;top:0;max-width:62px;overflow:hidden;">forward</div><div class="t n r" style="left:856px;width:57px;top:0;">90.5 KiB</div><div class="t n r" style="left:916px;width:57px;top:0;">1 647</div><div class="t" style="left:758px;top:0;max-width:47px;overflow:hidden;">LAN</div><div class="t" style="left:808px;top:0;max-width:47px;overflow:hidden;">WAN</div></div><div class="row" style="top:452px;width:983px"><div class="t" style="left:16.5px;top:0">;;; Access Internet</div></div><div class="row" style="top:467px;width:983px"><div class="vl" style="left:23px;height:14px;background:#e3e3e3"></div><div class="vl" style="left:50px;height:14px;background:#e3e3e3"></div><div class="vl" style="left:142px;height:14px;background:#e3e3e3"></div><div class="vl" style="left:207px;height:14px;background:#e3e3e3"></div><div class="vl" style="left:277px;height:14px;background:#e3e3e3"></div><div class="vl" style="left:347px;height:14px;background:#e3e3e3"></div><div class="vl" style="left:420px;height:14px;background:#e3e3e3"></div><div class="vl" style="left:481px;height:14px;background:#e3e3e3"></div><div class="vl" style="left:535px;height:14px;background:#e3e3e3"></div><div class="vl" style="left:595px;height:14px;background:#e3e3e3"></div><div class="vl" style="left:655px;height:14px;background:#e3e3e3"></div><div class="vl" style="left:705px;height:14px;background:#e3e3e3"></div><div class="vl" style="left:755px;height:14px;background:#e3e3e3"></div><div class="vl" style="left:805px;height:14px;background:#e3e3e3"></div><div class="vl" style="left:855px;height:14px;background:#e3e3e3"></div><div class="vl" style="left:915px;height:14px;background:#e3e3e3"></div><div class="vl" style="left:975px;height:14px;background:#e3e3e3"></div><div class="t n r" style="left:0px;width:21px;top:0;">15</div><svg style="left:53px;top:1px" width="13" height="11" viewBox="0 0 13 11"><path d="M.7 5.8l2.6-2.6 1.7 1.8L9.4 .7l2.5 2.6-6.9 7.4z" fill="#3cd828" stroke="#1c8c14" stroke-width="1"/></svg><div class="t" style="left:68.5px;top:0;max-width:73.5px;overflow:hidden;">accept</div><div class="t" style="left:145px;top:0;max-width:62px;overflow:hidden;">forward</div><div class="t n r" style="left:856px;width:57px;top:0;">5.8 KiB</div><div class="t n r" style="left:916px;width:57px;top:0;">99</div><div class="t" style="left:758px;top:0;max-width:47px;overflow:hidden;">VPN</div><div class="t" style="left:808px;top:0;max-width:47px;overflow:hidden;">WAN</div></div><div class="row" style="top:482px;width:983px"><div class="t" style="left:16.5px;top:0">;;; ICMP</div></div><div class="row" style="top:497px;width:983px"><div class="vl" style="left:23px;height:14px;background:#e3e3e3"></div><div class="vl" style="left:50px;height:14px;background:#e3e3e3"></div><div class="vl" style="left:142px;height:14px;background:#e3e3e3"></div><div class="vl" style="left:207px;height:14px;background:#e3e3e3"></div><div class="vl" style="left:277px;height:14px;background:#e3e3e3"></div><div class="vl" style="left:347px;height:14px;background:#e3e3e3"></div><div class="vl" style="left:420px;height:14px;background:#e3e3e3"></div><div class="vl" style="left:481px;height:14px;background:#e3e3e3"></div><div class="vl" style="left:535px;height:14px;background:#e3e3e3"></div><div class="vl" style="left:595px;height:14px;background:#e3e3e3"></div><div class="vl" style="left:655px;height:14px;background:#e3e3e3"></div><div class="vl" style="left:705px;height:14px;background:#e3e3e3"></div><div class="vl" style="left:755px;height:14px;background:#e3e3e3"></div><div class="vl" style="left:805px;height:14px;background:#e3e3e3"></div><div class="vl" style="left:855px;height:14px;background:#e3e3e3"></div><div class="vl" style="left:915px;height:14px;background:#e3e3e3"></div><div class="vl" style="left:975px;height:14px;background:#e3e3e3"></div><div class="t n r" style="left:0px;width:21px;top:0;">16</div><svg style="left:53px;top:1px" width="13" height="11" viewBox="0 0 13 11"><path d="M.7 5.8l2.6-2.6 1.7 1.8L9.4 .7l2.5 2.6-6.9 7.4z" fill="#3cd828" stroke="#1c8c14" stroke-width="1"/></svg><div class="t" style="left:68.5px;top:0;max-width:73.5px;overflow:hidden;">accept</div><div class="t" style="left:145px;top:0;max-width:62px;overflow:hidden;">forward</div><div class="t n r" style="left:856px;width:57px;top:0;">0 B</div><div class="t n r" style="left:916px;width:57px;top:0;">0</div><div class="t" style="left:484px;top:0;max-width:51px;overflow:hidden;">1 (icmp)</div></div><div class="row" style="top:512px;width:983px"><div class="t" style="left:16.5px;top:0">;;; VPN</div></div><div class="row" style="top:527px;width:983px"><div class="vl" style="left:23px;height:14px;background:#e3e3e3"></div><div class="vl" style="left:50px;height:14px;background:#e3e3e3"></div><div class="vl" style="left:142px;height:14px;background:#e3e3e3"></div><div class="vl" style="left:207px;height:14px;background:#e3e3e3"></div><div class="vl" style="left:277px;height:14px;background:#e3e3e3"></div><div class="vl" style="left:347px;height:14px;background:#e3e3e3"></div><div class="vl" style="left:420px;height:14px;background:#e3e3e3"></div><div class="vl" style="left:481px;height:14px;background:#e3e3e3"></div><div class="vl" style="left:535px;height:14px;background:#e3e3e3"></div><div class="vl" style="left:595px;height:14px;background:#e3e3e3"></div><div class="vl" style="left:655px;height:14px;background:#e3e3e3"></div><div class="vl" style="left:705px;height:14px;background:#e3e3e3"></div><div class="vl" style="left:755px;height:14px;background:#e3e3e3"></div><div class="vl" style="left:805px;height:14px;background:#e3e3e3"></div><div class="vl" style="left:855px;height:14px;background:#e3e3e3"></div><div class="vl" style="left:915px;height:14px;background:#e3e3e3"></div><div class="vl" style="left:975px;height:14px;background:#e3e3e3"></div><div class="t n r" style="left:0px;width:21px;top:0;">17</div><svg style="left:53px;top:1px" width="13" height="11" viewBox="0 0 13 11"><path d="M.7 5.8l2.6-2.6 1.7 1.8L9.4 .7l2.5 2.6-6.9 7.4z" fill="#3cd828" stroke="#1c8c14" stroke-width="1"/></svg><div class="t" style="left:68.5px;top:0;max-width:73.5px;overflow:hidden;">accept</div><div class="t" style="left:145px;top:0;max-width:62px;overflow:hidden;">forward</div><div class="t n r" style="left:856px;width:57px;top:0;">468 B</div><div class="t n r" style="left:916px;width:57px;top:0;">9</div><div class="t" style="left:350px;top:0;max-width:70px;overflow:hidden;">VPN</div><div class="t" style="left:423px;top:0;max-width:58px;overflow:hidden;">Local-LAN</div></div><div class="row" style="top:542px;width:983px"><div class="t" style="left:16.5px;top:0">;;; VPN</div></div><div class="row" style="top:557px;width:983px"><div class="vl" style="left:23px;height:14px;background:#e3e3e3"></div><div class="vl" style="left:50px;height:14px;background:#e3e3e3"></div><div class="vl" style="left:142px;height:14px;background:#e3e3e3"></div><div class="vl" style="left:207px;height:14px;background:#e3e3e3"></div><div class="vl" style="left:277px;height:14px;background:#e3e3e3"></div><div class="vl" style="left:347px;height:14px;background:#e3e3e3"></div><div class="vl" style="left:420px;height:14px;background:#e3e3e3"></div><div class="vl" style="left:481px;height:14px;background:#e3e3e3"></div><div class="vl" style="left:535px;height:14px;background:#e3e3e3"></div><div class="vl" style="left:595px;height:14px;background:#e3e3e3"></div><div class="vl" style="left:655px;height:14px;background:#e3e3e3"></div><div class="vl" style="left:705px;height:14px;background:#e3e3e3"></div><div class="vl" style="left:755px;height:14px;background:#e3e3e3"></div><div class="vl" style="left:805px;height:14px;background:#e3e3e3"></div><div class="vl" style="left:855px;height:14px;background:#e3e3e3"></div><div class="vl" style="left:915px;height:14px;background:#e3e3e3"></div><div class="vl" style="left:975px;height:14px;background:#e3e3e3"></div><div class="t n r" style="left:0px;width:21px;top:0;">18</div><svg style="left:53px;top:1px" width="13" height="11" viewBox="0 0 13 11"><path d="M.7 5.8l2.6-2.6 1.7 1.8L9.4 .7l2.5 2.6-6.9 7.4z" fill="#3cd828" stroke="#1c8c14" stroke-width="1"/></svg><div class="t" style="left:68.5px;top:0;max-width:73.5px;overflow:hidden;">accept</div><div class="t" style="left:145px;top:0;max-width:62px;overflow:hidden;">forward</div><div class="t n r" style="left:856px;width:57px;top:0;">260 B</div><div class="t n r" style="left:916px;width:57px;top:0;">5</div><div class="t" style="left:350px;top:0;max-width:70px;overflow:hidden;">VPN</div><div class="t" style="left:423px;top:0;max-width:58px;overflow:hidden;">VLAN10</div></div><div class="row" style="top:572px;width:983px"><div class="t" style="left:16.5px;top:0">;;; LAN-Access</div></div><div class="row" style="top:587px;width:983px"><div class="vl" style="left:23px;height:14px;background:#e3e3e3"></div><div class="vl" style="left:50px;height:14px;background:#e3e3e3"></div><div class="vl" style="left:142px;height:14px;background:#e3e3e3"></div><div class="vl" style="left:207px;height:14px;background:#e3e3e3"></div><div class="vl" style="left:277px;height:14px;background:#e3e3e3"></div><div class="vl" style="left:347px;height:14px;background:#e3e3e3"></div><div class="vl" style="left:420px;height:14px;background:#e3e3e3"></div><div class="vl" style="left:481px;height:14px;background:#e3e3e3"></div><div class="vl" style="left:535px;height:14px;background:#e3e3e3"></div><div class="vl" style="left:595px;height:14px;background:#e3e3e3"></div><div class="vl" style="left:655px;height:14px;background:#e3e3e3"></div><div class="vl" style="left:705px;height:14px;background:#e3e3e3"></div><div class="vl" style="left:755px;height:14px;background:#e3e3e3"></div><div class="vl" style="left:805px;height:14px;background:#e3e3e3"></div><div class="vl" style="left:855px;height:14px;background:#e3e3e3"></div><div class="vl" style="left:915px;height:14px;background:#e3e3e3"></div><div class="vl" style="left:975px;height:14px;background:#e3e3e3"></div><div class="t n r" style="left:0px;width:21px;top:0;">19</div><svg style="left:53px;top:1px" width="13" height="11" viewBox="0 0 13 11"><path d="M.7 5.8l2.6-2.6 1.7 1.8L9.4 .7l2.5 2.6-6.9 7.4z" fill="#3cd828" stroke="#1c8c14" stroke-width="1"/></svg><div class="t" style="left:68.5px;top:0;max-width:73.5px;overflow:hidden;">accept</div><div class="t" style="left:145px;top:0;max-width:62px;overflow:hidden;">forward</div><div class="t n r" style="left:856px;width:57px;top:0;">156 B</div><div class="t n r" style="left:916px;width:57px;top:0;">3</div><div class="t" style="left:350px;top:0;max-width:70px;overflow:hidden;">Local-LAN</div><div class="t" style="left:423px;top:0;max-width:58px;overflow:hidden;">VLAN10</div></div><div class="row" style="top:602px;width:983px"><div class="t" style="left:16.5px;top:0">;;; LAN-Access</div></div><div class="row" style="top:617px;width:983px"><div class="vl" style="left:23px;height:14px;background:#e3e3e3"></div><div class="vl" style="left:50px;height:14px;background:#e3e3e3"></div><div class="vl" style="left:142px;height:14px;background:#e3e3e3"></div><div class="vl" style="left:207px;height:14px;background:#e3e3e3"></div><div class="vl" style="left:277px;height:14px;background:#e3e3e3"></div><div class="vl" style="left:347px;height:14px;background:#e3e3e3"></div><div class="vl" style="left:420px;height:14px;background:#e3e3e3"></div><div class="vl" style="left:481px;height:14px;background:#e3e3e3"></div><div class="vl" style="left:535px;height:14px;background:#e3e3e3"></div><div class="vl" style="left:595px;height:14px;background:#e3e3e3"></div><div class="vl" style="left:655px;height:14px;background:#e3e3e3"></div><div class="vl" style="left:705px;height:14px;background:#e3e3e3"></div><div class="vl" style="left:755px;height:14px;background:#e3e3e3"></div><div class="vl" style="left:805px;height:14px;background:#e3e3e3"></div><div class="vl" style="left:855px;height:14px;background:#e3e3e3"></div><div class="vl" style="left:915px;height:14px;background:#e3e3e3"></div><div class="vl" style="left:975px;height:14px;background:#e3e3e3"></div><div class="t n r" style="left:0px;width:21px;top:0;">20</div><svg style="left:53px;top:1px" width="13" height="11" viewBox="0 0 13 11"><path d="M.7 5.8l2.6-2.6 1.7 1.8L9.4 .7l2.5 2.6-6.9 7.4z" fill="#3cd828" stroke="#1c8c14" stroke-width="1"/></svg><div class="t" style="left:68.5px;top:0;max-width:73.5px;overflow:hidden;">accept</div><div class="t" style="left:145px;top:0;max-width:62px;overflow:hidden;">forward</div><div class="t n r" style="left:856px;width:57px;top:0;">0 B</div><div class="t n r" style="left:916px;width:57px;top:0;">0</div><div class="t" style="left:350px;top:0;max-width:70px;overflow:hidden;">Local-LAN</div><div class="t" style="left:423px;top:0;max-width:58px;overflow:hidden;">VLAN20</div></div><div class="row" style="top:632px;width:983px"><div class="t" style="left:16.5px;top:0">;;; LAN-Access</div></div><div class="row" style="top:647px;width:983px"><div class="vl" style="left:23px;height:14px;background:#e3e3e3"></div><div class="vl" style="left:50px;height:14px;background:#e3e3e3"></div><div class="vl" style="left:142px;height:14px;background:#e3e3e3"></div><div class="vl" style="left:207px;height:14px;background:#e3e3e3"></div><div class="vl" style="left:277px;height:14px;background:#e3e3e3"></div><div class="vl" style="left:347px;height:14px;background:#e3e3e3"></div><div class="vl" style="left:420px;height:14px;background:#e3e3e3"></div><div class="vl" style="left:481px;height:14px;background:#e3e3e3"></div><div class="vl" style="left:535px;height:14px;background:#e3e3e3"></div><div class="vl" style="left:595px;height:14px;background:#e3e3e3"></div><div class="vl" style="left:655px;height:14px;background:#e3e3e3"></div><div class="vl" style="left:705px;height:14px;background:#e3e3e3"></div><div class="vl" style="left:755px;height:14px;background:#e3e3e3"></div><div class="vl" style="left:805px;height:14px;background:#e3e3e3"></div><div class="vl" style="left:855px;height:14px;background:#e3e3e3"></div><div class="vl" style="left:915px;height:14px;background:#e3e3e3"></div><div class="vl" style="left:975px;height:14px;background:#e3e3e3"></div><div class="t n r" style="left:0px;width:21px;top:0;">21</div><svg style="left:53px;top:1px" width="13" height="11" viewBox="0 0 13 11"><path d="M.7 5.8l2.6-2.6 1.7 1.8L9.4 .7l2.5 2.6-6.9 7.4z" fill="#3cd828" stroke="#1c8c14" stroke-width="1"/></svg><div class="t" style="left:68.5px;top:0;max-width:73.5px;overflow:hidden;">accept</div><div class="t" style="left:145px;top:0;max-width:62px;overflow:hidden;">forward</div><div class="t n r" style="left:856px;width:57px;top:0;">0 B</div><div class="t n r" style="left:916px;width:57px;top:0;">0</div><div class="t" style="left:350px;top:0;max-width:70px;overflow:hidden;">Local-LAN</div><div class="t" style="left:423px;top:0;max-width:58px;overflow:hidden;">VLAN30</div></div><div class="row" style="top:662px;width:983px"><div class="t" style="left:16.5px;top:0">;;; LAN-Access</div></div><div class="row" style="top:677px;width:983px"><div class="vl" style="left:23px;height:14px;background:#e3e3e3"></div><div class="vl" style="left:50px;height:14px;background:#e3e3e3"></div><div class="vl" style="left:142px;height:14px;background:#e3e3e3"></div><div class="vl" style="left:207px;height:14px;background:#e3e3e3"></div><div class="vl" style="left:277px;height:14px;background:#e3e3e3"></div><div class="vl" style="left:347px;height:14px;background:#e3e3e3"></div><div class="vl" style="left:420px;height:14px;background:#e3e3e3"></div><div class="vl" style="left:481px;height:14px;background:#e3e3e3"></div><div class="vl" style="left:535px;height:14px;background:#e3e3e3"></div><div class="vl" style="left:595px;height:14px;background:#e3e3e3"></div><div class="vl" style="left:655px;height:14px;background:#e3e3e3"></div><div class="vl" style="left:705px;height:14px;background:#e3e3e3"></div><div class="vl" style="left:755px;height:14px;background:#e3e3e3"></div><div class="vl" style="left:805px;height:14px;background:#e3e3e3"></div><div class="vl" style="left:855px;height:14px;background:#e3e3e3"></div><div class="vl" style="left:915px;height:14px;background:#e3e3e3"></div><div class="vl" style="left:975px;height:14px;background:#e3e3e3"></div><div class="t n r" style="left:0px;width:21px;top:0;">22</div><svg style="left:53px;top:1px" width="13" height="11" viewBox="0 0 13 11"><path d="M.7 5.8l2.6-2.6 1.7 1.8L9.4 .7l2.5 2.6-6.9 7.4z" fill="#3cd828" stroke="#1c8c14" stroke-width="1"/></svg><div class="t" style="left:68.5px;top:0;max-width:73.5px;overflow:hidden;">accept</div><div class="t" style="left:145px;top:0;max-width:62px;overflow:hidden;">forward</div><div class="t n r" style="left:856px;width:57px;top:0;">0 B</div><div class="t n r" style="left:916px;width:57px;top:0;">0</div><div class="t" style="left:350px;top:0;max-width:70px;overflow:hidden;">VLAN20</div><div class="t" style="left:423px;top:0;max-width:58px;overflow:hidden;">Local-LAN</div></div><div class="row" style="top:692px;width:983px"><div class="t" style="left:16.5px;top:0">;;; allow port forwarding</div></div><div class="row" style="top:707px;width:983px"><div class="vl" style="left:23px;height:14px;background:#e3e3e3"></div><div class="vl" style="left:50px;height:14px;background:#e3e3e3"></div><div class="vl" style="left:142px;height:14px;background:#e3e3e3"></div><div class="vl" style="left:207px;height:14px;background:#e3e3e3"></div><div class="vl" style="left:277px;height:14px;background:#e3e3e3"></div><div class="vl" style="left:347px;height:14px;background:#e3e3e3"></div><div class="vl" style="left:420px;height:14px;background:#e3e3e3"></div><div class="vl" style="left:481px;height:14px;background:#e3e3e3"></div><div class="vl" style="left:535px;height:14px;background:#e3e3e3"></div><div class="vl" style="left:595px;height:14px;background:#e3e3e3"></div><div class="vl" style="left:655px;height:14px;background:#e3e3e3"></div><div class="vl" style="left:705px;height:14px;background:#e3e3e3"></div><div class="vl" style="left:755px;height:14px;background:#e3e3e3"></div><div class="vl" style="left:805px;height:14px;background:#e3e3e3"></div><div class="vl" style="left:855px;height:14px;background:#e3e3e3"></div><div class="vl" style="left:915px;height:14px;background:#e3e3e3"></div><div class="vl" style="left:975px;height:14px;background:#e3e3e3"></div><div class="t n r" style="left:0px;width:21px;top:0;">23</div><svg style="left:53px;top:1px" width="13" height="11" viewBox="0 0 13 11"><path d="M.7 5.8l2.6-2.6 1.7 1.8L9.4 .7l2.5 2.6-6.9 7.4z" fill="#3cd828" stroke="#1c8c14" stroke-width="1"/></svg><div class="t" style="left:68.5px;top:0;max-width:73.5px;overflow:hidden;">accept</div><div class="t" style="left:145px;top:0;max-width:62px;overflow:hidden;">forward</div><div class="t n r" style="left:856px;width:57px;top:0;">0 B</div><div class="t n r" style="left:916px;width:57px;top:0;">0</div></div><div class="row" style="top:722px;width:983px"><div class="t" style="left:16.5px;top:0">;;; Drop everything else</div></div><div class="row" style="top:737px;width:983px"><div class="vl" style="left:23px;height:14px;background:#e3e3e3"></div><div class="vl" style="left:50px;height:14px;background:#e3e3e3"></div><div class="vl" style="left:142px;height:14px;background:#e3e3e3"></div><div class="vl" style="left:207px;height:14px;background:#e3e3e3"></div><div class="vl" style="left:277px;height:14px;background:#e3e3e3"></div><div class="vl" style="left:347px;height:14px;background:#e3e3e3"></div><div class="vl" style="left:420px;height:14px;background:#e3e3e3"></div><div class="vl" style="left:481px;height:14px;background:#e3e3e3"></div><div class="vl" style="left:535px;height:14px;background:#e3e3e3"></div><div class="vl" style="left:595px;height:14px;background:#e3e3e3"></div><div class="vl" style="left:655px;height:14px;background:#e3e3e3"></div><div class="vl" style="left:705px;height:14px;background:#e3e3e3"></div><div class="vl" style="left:755px;height:14px;background:#e3e3e3"></div><div class="vl" style="left:805px;height:14px;background:#e3e3e3"></div><div class="vl" style="left:855px;height:14px;background:#e3e3e3"></div><div class="vl" style="left:915px;height:14px;background:#e3e3e3"></div><div class="vl" style="left:975px;height:14px;background:#e3e3e3"></div><div class="t n r" style="left:0px;width:21px;top:0;">24</div><svg style="left:53px;top:1px" width="12" height="12" viewBox="0 0 12 12"><path d="M2.9 .5L6 3.6 9.1 .5 11.5 2.9 8.4 6 11.5 9.1 9.1 11.5 6 8.4 2.9 11.5 .5 9.1 3.6 6 .5 2.9z" fill="#d42434" stroke="#981424" stroke-width=".9"/></svg><div class="t" style="left:68.5px;top:0;max-width:73.5px;overflow:hidden;">drop</div><div class="t" style="left:145px;top:0;max-width:62px;overflow:hidden;">forward</div><div class="t n r" style="left:856px;width:57px;top:0;">27.8 KiB</div><div class="t n r" style="left:916px;width:57px;top:0;">435</div></div></div><div style="left:12px;top:871px;width:985px;height:22px;border:1px solid #a0a0a0;border-top:0"></div><div class="t" style="left:15px;top:874px;">25 items (1 selected)</div><div style="left:363px;top:58px;width:66px;height:5px;background:#000;border-radius:2.5px;transform:rotate(1.6deg)"></div><div style="left:434px;top:22px;width:400px;height:149px;background:#f0f0f0"></div><div class="tab" style="left:437px;top:27px;width:64px;height:21px;line-height:21px">Filter Rules</div><div class="tab" style="left:503px;top:27px;width:34px;height:21px;line-height:21px">NAT</div><div class="tab" style="left:539px;top:27px;width:47px;height:21px;line-height:21px">Mangle</div><div class="tab" style="left:588px;top:27px;width:34px;height:21px;line-height:21px">Raw</div><div class="tab" style="left:624px;top:27px;width:75px;height:21px;line-height:21px">Service Ports</div><div class="tab" style="left:701px;top:27px;width:70px;height:21px;line-height:21px">Connections</div><div style="left:773px;top:22px;width:61px;height:26px;background:#f0f0f0;border-left:1px solid #fff;border-top:1px solid #fff;overflow:hidden;white-space:nowrap;line-height:26px;padding-left:6px">Address Lists</div><div style="left:777px;top:46px;width:47px;height:4px;background:#000;border-radius:2.0px"></div><div class="b" style="left:435px;top:52px;width:22px;height:23px;"><svg style="left:4px;top:5px" width="12" height="12" viewBox="0 0 12 12"><g shape-rendering="crispEdges"><path d="M4 0h4v4h4v4h-4v4h-4v-4h-4v-4h4z" fill="#000078"/><path d="M5 1h2v4h4v2h-4v4h-2v-4h-4v-2h4z" fill="#0c0cf0"/></g></svg></div><div class="b" style="left:460px;top:52px;width:22px;height:23px;"><svg style="left:4px;top:9px" width="12" height="4" viewBox="0 0 12 4"><rect x=".5" y=".5" width="11" height="3" fill="#e8e8e8" stroke="#b4b4b4"/></svg></div><div class="b" style="left:490px;top:52px;width:22px;height:23px;"><svg style="left:4px;top:6px" width="12" height="11" viewBox="0 0 12 11"><path d="M.8 5.8l1.8-1.8 2.2 2.2L9.8 1l1.6 1.6-6.6 7.2z" fill="#f8f8f8" stroke="#a8a8a8" stroke-width=".9"/></svg></div><div class="b" style="left:515px;top:52px;width:22px;height:23px;"><svg style="left:4.5px;top:5.5px" width="11" height="11" viewBox="0 0 11 11"><path d="M2 .5L5.5 4 9 .5 10.5 2 7 5.5 10.5 9 9 10.5 5.5 7 2 10.5 .5 9 4 5.5 .5 2z" fill="#f8f8f8" stroke="#a8a8a8" stroke-width=".9"/></svg></div><div class="b" style="left:545px;top:52px;width:22px;height:23px;"><svg style="left:3.5px;top:5.5px" width="13" height="10" viewBox="0 0 13 10"><path d="M3.5 .5h9v9h-12v-6z" fill="#f6f6f6" stroke="#a8a8a8"/><path d="M.5 3.5h3v-3" fill="none" stroke="#a8a8a8"/><path d="M6 3.5h2M9 3.5h2M6 5.5h2" stroke="#a8a8a8"/></svg></div><div class="b" style="left:575px;top:52px;width:22px;height:23px;"><svg style="left:4px;top:5px" width="12" height="12" viewBox="0 0 12 12"><path d="M.7 .8h10.6L7.2 5.6v5.6H4.8V5.6z" fill="#a8c4ee" stroke="#101010" stroke-width="1.1"/></svg></div><div class="tb" style="left:435px;top:78px;width:398px;height:93px;border-bottom:0"><div class="h" style="left:0px;top:0;width:20px;height:17px;"></div><div class="h" style="left:20px;top:0;width:102px;height:17px;">List<svg style="left:91px;top:4px" width="6" height="6" viewBox="0 0 6 6"><path d="M.5 5.5L3 .5" fill="none" stroke="#909090"/><path d="M3 .5l2.5 5h-5" fill="none" stroke="#fff"/></svg></div><div class="h" style="left:122px;top:0;width:174px;height:17px;">Address</div><div class="h" style="left:296px;top:0;width:100px;height:17px;">Timeout</div><div class="row" style="top:17px;width:396px"><div class="vl" style="left:19px;height:14px;background:#e3e3e3"></div><div class="vl" style="left:121px;height:14px;background:#e3e3e3"></div><div class="vl" style="left:295px;height:14px;background:#e3e3e3"></div><div class="vl" style="left:395px;height:14px;background:#e3e3e3"></div><svg style="left:24px;top:3px" width="9" height="9" viewBox="0 0 9 9"><circle cx="4.5" cy="4.5" r="4" fill="#28a828"/><circle cx="4" cy="3.6" r="1.6" fill="#90f090"/></svg><div class="t" style="left:38px;top:0;max-width:83px;overflow:hidden;">Local-LAN</div><div class="t n" style="left:124px;top:0;max-width:171px;overflow:hidden;">192.168.88.0/24</div></div><div class="row" style="top:32px;width:396px"><div class="vl" style="left:19px;height:14px;background:#e3e3e3"></div><div class="vl" style="left:121px;height:14px;background:#e3e3e3"></div><div class="vl" style="left:295px;height:14px;background:#e3e3e3"></div><div class="vl" style="left:395px;height:14px;background:#e3e3e3"></div><svg style="left:24px;top:3px" width="9" height="9" viewBox="0 0 9 9"><circle cx="4.5" cy="4.5" r="4" fill="#28a828"/><circle cx="4" cy="3.6" r="1.6" fill="#90f090"/></svg><div class="t" style="left:38px;top:0;max-width:83px;overflow:hidden;">VLAN10</div><div class="t n" style="left:124px;top:0;max-width:171px;overflow:hidden;">172.16.10.0/24</div></div><div class="row" style="top:47px;width:396px"><div class="vl" style="left:19px;height:14px;background:#e3e3e3"></div><div class="vl" style="left:121px;height:14px;background:#e3e3e3"></div><div class="vl" style="left:295px;height:14px;background:#e3e3e3"></div><div class="vl" style="left:395px;height:14px;background:#e3e3e3"></div><svg style="left:24px;top:3px" width="9" height="9" viewBox="0 0 9 9"><circle cx="4.5" cy="4.5" r="4" fill="#28a828"/><circle cx="4" cy="3.6" r="1.6" fill="#90f090"/></svg><div class="t" style="left:38px;top:0;max-width:83px;overflow:hidden;">VLAN20</div><div class="t n" style="left:124px;top:0;max-width:171px;overflow:hidden;">172.16.20.0/24</div></div><div class="row" style="top:62px;width:396px"><div class="vl" style="left:19px;height:14px;background:#e3e3e3"></div><div class="vl" style="left:121px;height:14px;background:#e3e3e3"></div><div class="vl" style="left:295px;height:14px;background:#e3e3e3"></div><div class="vl" style="left:395px;height:14px;background:#e3e3e3"></div><svg style="left:24px;top:3px" width="9" height="9" viewBox="0 0 9 9"><circle cx="4.5" cy="4.5" r="4" fill="#28a828"/><circle cx="4" cy="3.6" r="1.6" fill="#90f090"/></svg><div class="t" style="left:38px;top:0;max-width:83px;overflow:hidden;">VLAN30</div><div class="t n" style="left:124px;top:0;max-width:171px;overflow:hidden;">172.16.30.0/24</div></div><div class="row" style="top:77px;width:396px"><div class="vl" style="left:19px;height:14px;background:#e3e3e3"></div><div class="vl" style="left:121px;height:14px;background:#e3e3e3"></div><div class="vl" style="left:295px;height:14px;background:#e3e3e3"></div><div class="vl" style="left:395px;height:14px;background:#e3e3e3"></div><svg style="left:24px;top:3px" width="9" height="9" viewBox="0 0 9 9"><circle cx="4.5" cy="4.5" r="4" fill="#28a828"/><circle cx="4" cy="3.6" r="1.6" fill="#90f090"/></svg><div class="t" style="left:38px;top:0;max-width:83px;overflow:hidden;">VPN</div><div class="t n" style="left:124px;top:0;max-width:171px;overflow:hidden;">10.199.1.0/24</div></div></div><div class="w" style="left:1009px;top:11px;width:791px;height:195px;"></div><div style="left:1010px;top:12px;width:789px;height:22px;background:#c0c0c0"><div class="t" style="left:5px;top:5.5px;color:#fff;letter-spacing:-.4px">PPP</div></div><div style="left:1010px;top:34px;width:789px;height:1px;background:#fff"></div><div style="left:1010px;top:34px;width:1px;height:171px;background:#fff"></div><div style="left:1010px;top:203px;width:789px;height:2px;background:#fff"></div><div class="tab" style="left:1016px;top:40px;width:55px;height:21px;line-height:21px">Interface</div><div class="tab" style="left:1072px;top:40px;width:86px;height:21px;line-height:21px">PPPoE Servers</div><div class="tab" style="left:1159px;top:40px;width:48px;height:21px;line-height:21px">Secrets</div><div class="tabA" style="left:1208px;top:36px;width:49px;height:26px">Profiles</div><div class="tab" style="left:1258px;top:40px;width:104px;height:21px;line-height:21px">Active Connections</div><div class="tab" style="left:1363px;top:40px;width:82px;height:21px;line-height:21px">L2TP Ethernet</div><div class="tab" style="left:1446px;top:40px;width:78px;height:21px;line-height:21px">L2TP Secrets</div><div class="b" style="left:1014px;top:65px;width:22px;height:22px;"><svg style="left:4px;top:4px" width="12" height="12" viewBox="0 0 12 12"><g shape-rendering="crispEdges"><path d="M4 0h4v4h4v4h-4v4h-4v-4h-4v-4h4z" fill="#000078"/><path d="M5 1h2v4h4v2h-4v4h-2v-4h-4v-2h4z" fill="#0c0cf0"/></g></svg></div><div class="b" style="left:1039px;top:65px;width:22px;height:22px;"><svg style="left:4px;top:8px" width="12" height="4" viewBox="0 0 12 4"><rect x=".5" y=".5" width="11" height="3" fill="#e8e8e8" stroke="#b4b4b4"/></svg></div><div class="b" style="left:1069px;top:65px;width:22px;height:22px;"><svg style="left:3.5px;top:4.5px" width="13" height="10" viewBox="0 0 13 10"><path d="M3.5 .5h9v9h-12v-6z" fill="#f6f6f6" stroke="#a8a8a8"/><path d="M.5 3.5h3v-3" fill="none" stroke="#a8a8a8"/><path d="M6 3.5h2M9 3.5h2M6 5.5h2" stroke="#a8a8a8"/></svg></div><div class="b" style="left:1099px;top:65px;width:22px;height:22px;"><svg style="left:4px;top:4px" width="12" height="12" viewBox="0 0 12 12"><path d="M.7 .8h10.6L7.2 5.6v5.6H4.8V5.6z" fill="#a8c4ee" stroke="#101010" stroke-width="1.1"/></svg></div><div class="tb" style="left:1014px;top:91px;width:781px;height:90px;"><div class="h" style="left:0px;top:0;width:13px;height:17px;"></div><div class="h" style="left:13px;top:0;width:90px;height:17px;">Name<svg style="left:79px;top:4px" width="6" height="6" viewBox="0 0 6 6"><path d="M.5 5.5L3 .5" fill="none" stroke="#909090"/><path d="M3 .5l2.5 5h-5" fill="none" stroke="#fff"/></svg></div><div class="h" style="left:103px;top:0;width:90px;height:17px;">Local Address</div><div class="h" style="left:193px;top:0;width:90px;height:17px;">Remote Address</div><div class="h" style="left:283px;top:0;width:60px;height:17px;">Bridge</div><div class="h" style="left:343px;top:0;width:60px;height:17px;">Rate Limit...</div><div class="h" style="left:403px;top:0;width:60px;height:17px;">Only One</div><div class="h" style="left:463px;top:0;width:316px;height:17px;border-right:0"></div><div class="row" style="top:17px;width:779px"><div class="vl" style="left:12px;height:14px;background:#e3e3e3"></div><div class="vl" style="left:102px;height:14px;background:#e3e3e3"></div><div class="vl" style="left:192px;height:14px;background:#e3e3e3"></div><div class="vl" style="left:282px;height:14px;background:#e3e3e3"></div><div class="vl" style="left:342px;height:14px;background:#e3e3e3"></div><div class="vl" style="left:402px;height:14px;background:#e3e3e3"></div><div class="vl" style="left:462px;height:14px;background:#e3e3e3"></div><div class="t" style="left:2px;top:0;max-width:10px;overflow:hidden;color:#4444b4">*</div><svg style="left:15px;top:1px" width="12" height="12" viewBox="0 0 12 12"><circle cx="6" cy="6" r="5.6" fill="#84308c"/><circle cx="6" cy="3.8" r="1.9" fill="#f0e020"/><rect x="4.2" y="6" width="3.6" height="4.2" rx="1.2" fill="#f0e020"/></svg><div class="t" style="left:30.5px;top:0;max-width:71.5px;overflow:hidden;color:#4444b4">default</div><div class="t" style="left:405px;top:0;max-width:57px;overflow:hidden;color:#4444b4">default</div></div><div class="row" style="top:32px;width:779px"><div class="vl" style="left:12px;height:14px;background:#e3e3e3"></div><div class="vl" style="left:102px;height:14px;background:#e3e3e3"></div><div class="vl" style="left:192px;height:14px;background:#e3e3e3"></div><div class="vl" style="left:282px;height:14px;background:#e3e3e3"></div><div class="vl" style="left:342px;height:14px;background:#e3e3e3"></div><div class="vl" style="left:402px;height:14px;background:#e3e3e3"></div><div class="vl" style="left:462px;height:14px;background:#e3e3e3"></div><div class="t" style="left:2px;top:0;max-width:10px;overflow:hidden;color:#4444b4">*</div><svg style="left:15px;top:1px" width="12" height="12" viewBox="0 0 12 12"><circle cx="6" cy="6" r="5.6" fill="#84308c"/><circle cx="6" cy="3.8" r="1.9" fill="#f0e020"/><rect x="4.2" y="6" width="3.6" height="4.2" rx="1.2" fill="#f0e020"/></svg><div class="t" style="left:30.5px;top:0;max-width:71.5px;overflow:hidden;color:#4444b4">default-encr...</div><div class="t" style="left:405px;top:0;max-width:57px;overflow:hidden;color:#4444b4">default</div></div><div class="row" style="top:47px;width:779px"><div class="vl" style="left:12px;height:14px;background:#e3e3e3"></div><div class="vl" style="left:102px;height:14px;background:#e3e3e3"></div><div class="vl" style="left:192px;height:14px;background:#e3e3e3"></div><div class="vl" style="left:282px;height:14px;background:#e3e3e3"></div><div class="vl" style="left:342px;height:14px;background:#e3e3e3"></div><div class="vl" style="left:402px;height:14px;background:#e3e3e3"></div><div class="vl" style="left:462px;height:14px;background:#e3e3e3"></div><svg style="left:15px;top:1px" width="12" height="12" viewBox="0 0 12 12"><circle cx="6" cy="6" r="5.6" fill="#84308c"/><circle cx="6" cy="3.8" r="1.9" fill="#f0e020"/><rect x="4.2" y="6" width="3.6" height="4.2" rx="1.2" fill="#f0e020"/></svg><div class="t" style="left:30.5px;top:0;max-width:71.5px;overflow:hidden;">vpn-test</div><div class="t n" style="left:105px;top:0;max-width:87px;overflow:hidden;">10.199.1.1</div><div class="t" style="left:195px;top:0;max-width:87px;overflow:hidden;">pool-vpn</div><div class="t" style="left:405px;top:0;max-width:57px;overflow:hidden;">default</div></div></div><div style="left:1014px;top:181px;width:781px;height:21px;border:1px solid #a0a0a0;border-top:0"></div><div class="t" style="left:1017px;top:183px;">3 items</div><div style="left:1211px;top:60px;width:41px;height:5px;background:#000;border-radius:2.5px;transform:rotate(-2.5deg)"></div><div class="w" style="left:1011px;top:470px;width:646px;height:237px;"></div><div style="left:1012px;top:471px;width:644px;height:22px;background:#c0c0c0"><div class="t" style="left:5px;top:5.5px;color:#fff;letter-spacing:-.4px">Route List</div></div><div style="left:1012px;top:493px;width:644px;height:1px;background:#fff"></div><div style="left:1012px;top:493px;width:1px;height:213px;background:#fff"></div><div style="left:1012px;top:704px;width:644px;height:2px;background:#fff"></div><div style="left:1620px;top:475px;width:15px;height:15px;background:#f0f0f0;border:1px solid #303030"><svg style="left:2px;top:2px" width="9" height="9" viewBox="0 0 9 9"><rect x=".5" y="1" width="8" height="7.5" fill="none" stroke="#000" stroke-width="1"/><path d="M0 1h9" stroke="#000" stroke-width="2"/></svg></div><div style="left:1637px;top:475px;width:15px;height:15px;background:#f0f0f0;border:1px solid #303030"><svg style="left:3px;top:3px" width="7" height="7" viewBox="0 0 7 7"><path d="M.5 .5l6 6M6.5 .5l-6 6" stroke="#000" stroke-width="2"/></svg></div><div class="b" style="left:1014px;top:496px;width:22px;height:23px;"><svg style="left:4px;top:5px" width="12" height="12" viewBox="0 0 12 12"><g shape-rendering="crispEdges"><path d="M4 0h4v4h4v4h-4v4h-4v-4h-4v-4h4z" fill="#000078"/><path d="M5 1h2v4h4v2h-4v4h-2v-4h-4v-2h4z" fill="#0c0cf0"/></g></svg></div><div class="b" style="left:1039px;top:496px;width:22px;height:23px;"><svg style="left:4px;top:9px" width="12" height="4" viewBox="0 0 12 4"><rect x=".5" y=".5" width="11" height="3" fill="#e8e8e8" stroke="#b4b4b4"/></svg></div><div class="b" style="left:1069px;top:496px;width:22px;height:23px;"><svg style="left:4px;top:6px" width="12" height="11" viewBox="0 0 12 11"><path d="M.8 5.8l1.8-1.8 2.2 2.2L9.8 1l1.6 1.6-6.6 7.2z" fill="#f8f8f8" stroke="#a8a8a8" stroke-width=".9"/></svg></div><div class="b" style="left:1094px;top:496px;width:22px;height:23px;"><svg style="left:4.5px;top:5.5px" width="11" height="11" viewBox="0 0 11 11"><path d="M2 .5L5.5 4 9 .5 10.5 2 7 5.5 10.5 9 9 10.5 5.5 7 2 10.5 .5 9 4 5.5 .5 2z" fill="#f8f8f8" stroke="#a8a8a8" stroke-width=".9"/></svg></div><div class="b" style="left:1124px;top:496px;width:22px;height:23px;"><svg style="left:3.5px;top:5.5px" width="13" height="10" viewBox="0 0 13 10"><path d="M3.5 .5h9v9h-12v-6z" fill="#f6f6f6" stroke="#a8a8a8"/><path d="M.5 3.5h3v-3" fill="none" stroke="#a8a8a8"/><path d="M6 3.5h2M9 3.5h2M6 5.5h2" stroke="#a8a8a8"/></svg></div><div class="b" style="left:1154px;top:496px;width:22px;height:23px;"><svg style="left:4px;top:5px" width="12" height="12" viewBox="0 0 12 12"><path d="M.7 .8h10.6L7.2 5.6v5.6H4.8V5.6z" fill="#a8c4ee" stroke="#101010" stroke-width="1.1"/></svg></div><div class="tb" style="left:1014px;top:522px;width:638px;height:146px;"><div class="h" style="left:0px;top:0;width:55px;height:17px;"></div><div class="h" style="left:55px;top:0;width:135px;height:17px;">Dst. Address<svg style="left:124px;top:4px" width="6" height="6" viewBox="0 0 6 6"><path d="M.5 5.5L3 .5" fill="none" stroke="#909090"/><path d="M3 .5l2.5 5h-5" fill="none" stroke="#fff"/></svg></div><div class="h" style="left:190px;top:0;width:195px;height:17px;">Gateway</div><div class="h" style="left:385px;top:0;width:100px;height:17px;">Distance</div><div class="h" style="left:485px;top:0;width:137px;height:17px;">Routing Mark</div><div class="h" style="left:622px;top:0;width:14px;height:17px;padding:0"><svg style="left:2.5px;top:5px" width="9" height="5" viewBox="0 0 9 5"><path d="M0 0h9L4.5 5z" fill="#000"/></svg></div><div class="row" style="top:17px;width:636px"><div class="vl" style="left:54px;height:14px;background:#e3e3e3"></div><div class="vl" style="left:189px;height:14px;background:#e3e3e3"></div><div class="t" style="left:2px;top:0;max-width:52px;overflow:hidden;">DAd</div><svg style="left:60px;top:2px" width="7" height="11" viewBox="0 0 7 11"><path d="M.5 .5v10L6.5 5.5z" fill="#30c030" stroke="#207020" stroke-width="1"/></svg><div class="t n" style="left:72.5px;top:0;max-width:116.5px;overflow:hidden;">0.0.0.0/0</div><div class="t n" style="left:192px;top:0;max-width:192px;overflow:hidden;">10.10.10.1</div></div><div class="row" style="top:32px;width:636px"><div class="vl" style="left:54px;height:14px;background:#e3e3e3"></div><div class="vl" style="left:189px;height:14px;background:#e3e3e3"></div><div class="t" style="left:2px;top:0;max-width:52px;overflow:hidden;">DAC</div><svg style="left:60px;top:2px" width="7" height="11" viewBox="0 0 7 11"><path d="M.5 .5v10L6.5 5.5z" fill="#30c030" stroke="#207020" stroke-width="1"/></svg><div class="t n" style="left:72.5px;top:0;max-width:116.5px;overflow:hidden;">10.10.10.0/24</div><div class="t " style="left:192px;top:0;max-width:192px;overflow:hidden;">ether1</div></div><div class="row" style="top:47px;width:636px"><div class="vl" style="left:54px;height:14px;background:#e3e3e3"></div><div class="vl" style="left:189px;height:14px;background:#e3e3e3"></div><div class="t" style="left:2px;top:0;max-width:52px;overflow:hidden;">DAC</div><svg style="left:60px;top:2px" width="7" height="11" viewBox="0 0 7 11"><path d="M.5 .5v10L6.5 5.5z" fill="#30c030" stroke="#207020" stroke-width="1"/></svg><div class="t n" style="left:72.5px;top:0;max-width:116.5px;overflow:hidden;">10.199.1.0/24</div><div class="t " style="left:192px;top:0;max-width:192px;overflow:hidden;">bridge2</div></div><div class="row" style="top:62px;width:636px"><div class="vl" style="left:54px;height:14px;background:#e3e3e3"></div><div class="vl" style="left:189px;height:14px;background:#e3e3e3"></div><div class="t" style="left:2px;top:0;max-width:52px;overflow:hidden;">DUCHI</div><svg style="left:60px;top:2px" width="7" height="11" viewBox="0 0 7 11"><path d="M.5 .5v10L6.5 5.5z" fill="#30c030" stroke="#207020" stroke-width="1"/></svg><div class="t n" style="left:72.5px;top:0;max-width:116.5px;overflow:hidden;">172.16.1.0/24</div><div class="t " style="left:192px;top:0;max-width:192px;overflow:hidden;">ether5</div></div><div class="row" style="top:77px;width:636px"><div class="vl" style="left:54px;height:14px;background:#e3e3e3"></div><div class="vl" style="left:189px;height:14px;background:#e3e3e3"></div><div class="t" style="left:2px;top:0;max-width:52px;overflow:hidden;">DAC</div><svg style="left:60px;top:2px" width="7" height="11" viewBox="0 0 7 11"><path d="M.5 .5v10L6.5 5.5z" fill="#30c030" stroke="#207020" stroke-width="1"/></svg><div class="t n" style="left:72.5px;top:0;max-width:116.5px;overflow:hidden;">172.16.10.0/24</div><div class="t " style="left:192px;top:0;max-width:192px;overflow:hidden;">vlan10</div></div><div class="row" style="top:92px;width:636px"><div class="vl" style="left:54px;height:14px;background:#e3e3e3"></div><div class="vl" style="left:189px;height:14px;background:#e3e3e3"></div><div class="t" style="left:2px;top:0;max-width:52px;overflow:hidden;">DAC</div><svg style="left:60px;top:2px" width="7" height="11" viewBox="0 0 7 11"><path d="M.5 .5v10L6.5 5.5z" fill="#30c030" stroke="#207020" stroke-width="1"/></svg><div class="t n" style="left:72.5px;top:0;max-width:116.5px;overflow:hidden;">172.16.20.0/24</div><div class="t " style="left:192px;top:0;max-width:192px;overflow:hidden;">vlan20</div></div><div class="row" style="top:107px;width:636px"><div class="vl" style="left:54px;height:14px;background:#e3e3e3"></div><div class="vl" style="left:189px;height:14px;background:#e3e3e3"></div><div class="t" style="left:2px;top:0;max-width:52px;overflow:hidden;">DAC</div><svg style="left:60px;top:2px" width="7" height="11" viewBox="0 0 7 11"><path d="M.5 .5v10L6.5 5.5z" fill="#30c030" stroke="#207020" stroke-width="1"/></svg><div class="t n" style="left:72.5px;top:0;max-width:116.5px;overflow:hidden;">172.16.30.0/24</div><div class="t " style="left:192px;top:0;max-width:192px;overflow:hidden;">vlan30</div></div><div class="row" style="top:122px;width:636px"><div class="vl" style="left:54px;height:14px;background:#e3e3e3"></div><div class="vl" style="left:189px;height:14px;background:#e3e3e3"></div><div class="t" style="left:2px;top:0;max-width:52px;overflow:hidden;">DAC</div><svg style="left:60px;top:2px" width="7" height="11" viewBox="0 0 7 11"><path d="M.5 .5v10L6.5 5.5z" fill="#30c030" stroke="#207020" stroke-width="1"/></svg><div class="t n" style="left:72.5px;top:0;max-width:116.5px;overflow:hidden;">192.168.88.0/24</div><div class="t " style="left:192px;top:0;max-width:192px;overflow:hidden;">bridge1</div></div></div><div class="b" style="left:1636px;top:500px;width:16px;height:17px;"><svg style="left:3px;top:4px" width="8" height="8" viewBox="0 0 8 8"><path d="M0 .5h8" stroke="#000" stroke-width="1.4"/><path d="M0 3h8L4 8z" fill="#000"/><path d="M3 1h2v3h-2z" fill="#000"/></svg></div><div style="left:1014px;top:667px;width:638px;height:16px;"><div style="left:0px;top:0px;width:638px;height:16px;background:#d8d8d8;border:1px solid #a0a0a0"></div><div style="left:0px;top:0px;width:16px;height:16px;background:#f0f0f0;border:1px solid #a0a0a0"><svg style="left:4px;top:4px" width="7" height="8" viewBox="0 0 7 8"><path d="M0 4L4 0v2.5h2.5v3H4V8z" fill="#000"/></svg></div><div style="left:622px;top:0px;width:16px;height:16px;background:#f0f0f0;border:1px solid #a0a0a0"><svg style="left:4px;top:4px" width="7" height="8" viewBox="0 0 7 8"><path d="M7 4L3 0v2.5H.5v3H3V8z" fill="#000"/></svg></div><div style="left:17px;top:0px;width:569px;height:16px;background:#f0f0f0;border:1px solid #a0a0a0;border-left:0;box-shadow:inset 1px 1px 0 #fff"></div></div><div style="left:1014px;top:683px;width:638px;height:20px;border:1px solid #a0a0a0;border-top:0"></div><div class="t" style="left:1017px;top:685px;">8 items out of 17</div><div style="left:1017px;top:494px;width:82px;height:4px;background:#000;border-radius:2.0px"></div><div class="w" style="left:1011px;top:707px;width:715px;height:248px;"></div><div style="left:1012px;top:708px;width:713px;height:22px;background:#c0c0c0"><div class="t" style="left:5px;top:5.5px;color:#fff;letter-spacing:-.4px">Interface List</div></div><div style="left:1012px;top:730px;width:713px;height:1px;background:#fff"></div><div style="left:1012px;top:730px;width:1px;height:224px;background:#fff"></div><div style="left:1012px;top:952px;width:713px;height:2px;background:#fff"></div><div class="tab" style="left:1018px;top:736px;width:54px;height:21px;line-height:22px">Interface</div><div class="tabA" style="left:1073px;top:732px;width:75px;height:26px">Interface List</div><div class="tab" style="left:1150px;top:736px;width:51px;height:21px;line-height:22px">Ethernet</div><div class="tab" style="left:1203px;top:736px;width:71px;height:21px;line-height:22px">EoIP Tunnel</div><div class="tab" style="left:1276px;top:736px;width:55px;height:21px;line-height:22px">IP Tunnel</div><div class="b" style="left:1016px;top:761px;width:22px;height:22px;"><svg style="left:4px;top:4px" width="12" height="12" viewBox="0 0 12 12"><g shape-rendering="crispEdges"><path d="M4 0h4v4h4v4h-4v4h-4v-4h-4v-4h4z" fill="#000078"/><path d="M5 1h2v4h4v2h-4v4h-2v-4h-4v-2h4z" fill="#0c0cf0"/></g></svg></div><div class="b" style="left:1041px;top:761px;width:22px;height:22px;"><svg style="left:4px;top:8px" width="12" height="4" viewBox="0 0 12 4"><rect x=".5" y=".5" width="11" height="3" fill="#e8e8e8" stroke="#b4b4b4"/></svg></div><div class="b" style="left:1071px;top:761px;width:22px;height:22px;"><svg style="left:4px;top:5px" width="12" height="11" viewBox="0 0 12 11"><path d="M.8 5.8l1.8-1.8 2.2 2.2L9.8 1l1.6 1.6-6.6 7.2z" fill="#f8f8f8" stroke="#a8a8a8" stroke-width=".9"/></svg></div><div class="b" style="left:1096px;top:761px;width:22px;height:22px;"><svg style="left:4.5px;top:4.5px" width="11" height="11" viewBox="0 0 11 11"><path d="M2 .5L5.5 4 9 .5 10.5 2 7 5.5 10.5 9 9 10.5 5.5 7 2 10.5 .5 9 4 5.5 .5 2z" fill="#f8f8f8" stroke="#a8a8a8" stroke-width=".9"/></svg></div><div class="b" style="left:1126px;top:761px;width:22px;height:22px;"><svg style="left:3.5px;top:4.5px" width="13" height="10" viewBox="0 0 13 10"><path d="M3.5 .5h9v9h-12v-6z" fill="#f6f6f6" stroke="#a8a8a8"/><path d="M.5 3.5h3v-3" fill="none" stroke="#a8a8a8"/><path d="M6 3.5h2M9 3.5h2M6 5.5h2" stroke="#a8a8a8"/></svg></div><div class="b" style="left:1156px;top:761px;width:22px;height:22px;"><svg style="left:4px;top:4px" width="12" height="12" viewBox="0 0 12 12"><path d="M.7 .8h10.6L7.2 5.6v5.6H4.8V5.6z" fill="#a8c4ee" stroke="#101010" stroke-width="1.1"/></svg></div><div class="b" style="left:1186px;top:761px;width:38px;height:22px;"><div class="t" style="left:0;width:36px;top:3px;text-align:center">Lists</div></div><div class="tb" style="left:1016px;top:787px;width:479px;height:144px;"><div class="h" style="left:0px;top:0;width:20px;height:17px;"></div><div class="h" style="left:20px;top:0;width:150px;height:17px;">List<svg style="left:139px;top:4px" width="6" height="6" viewBox="0 0 6 6"><path d="M.5 5.5L3 .5" fill="none" stroke="#909090"/><path d="M3 .5l2.5 5h-5" fill="none" stroke="#fff"/></svg></div><div class="h" style="left:170px;top:0;width:213px;height:17px;">Interface</div><div class="h" style="left:383px;top:0;width:94px;height:17px;border-right:0"></div><div class="row" style="top:17px;width:477px"><div class="t" style="left:16px;top:0">;;; defconf</div></div><div class="row" style="top:32px;width:477px"><div class="vl" style="left:19px;height:14px;background:#e3e3e3"></div><div class="vl" style="left:169px;height:14px;background:#e3e3e3"></div><div class="t" style="left:22px;top:0;max-width:147px;overflow:hidden;">LAN</div><div class="t" style="left:172px;top:0;max-width:210px;overflow:hidden;">bridge1</div></div><div class="row" style="top:47px;width:477px"><div class="vl" style="left:19px;height:14px;background:#e3e3e3"></div><div class="vl" style="left:169px;height:14px;background:#e3e3e3"></div><div class="t" style="left:22px;top:0;max-width:147px;overflow:hidden;">LAN</div><div class="t" style="left:172px;top:0;max-width:210px;overflow:hidden;">vlan10</div></div><div class="row" style="top:62px;width:477px"><div class="vl" style="left:19px;height:14px;background:#e3e3e3"></div><div class="vl" style="left:169px;height:14px;background:#e3e3e3"></div><div class="t" style="left:22px;top:0;max-width:147px;overflow:hidden;">LAN</div><div class="t" style="left:172px;top:0;max-width:210px;overflow:hidden;">vlan20</div></div><div class="row" style="top:77px;width:477px"><div class="vl" style="left:19px;height:14px;background:#e3e3e3"></div><div class="vl" style="left:169px;height:14px;background:#e3e3e3"></div><div class="t" style="left:22px;top:0;max-width:147px;overflow:hidden;">LAN</div><div class="t" style="left:172px;top:0;max-width:210px;overflow:hidden;">vlan30</div></div><div class="row" style="top:92px;width:477px"><div class="vl" style="left:19px;height:14px;background:#e3e3e3"></div><div class="vl" style="left:169px;height:14px;background:#e3e3e3"></div><div class="t" style="left:22px;top:0;max-width:147px;overflow:hidden;">LAN</div><div class="t" style="left:172px;top:0;max-width:210px;overflow:hidden;">bridge2</div></div><div class="row" style="top:107px;width:477px"><div class="t" style="left:16px;top:0">;;; defconf</div></div><div class="row" style="top:122px;width:477px"><div class="vl" style="left:19px;height:14px;background:#e3e3e3"></div><div class="vl" style="left:169px;height:14px;background:#e3e3e3"></div><div class="t" style="left:22px;top:0;max-width:147px;overflow:hidden;">WAN</div><div class="t" style="left:172px;top:0;max-width:210px;overflow:hidden;">ether1</div></div></div><div style="left:1016px;top:931px;width:479px;height:20px;border:1px solid #a0a0a0;border-top:0"></div><div class="t" style="left:1019px;top:932px;">6 items</div><div style="left:1017px;top:730px;width:74px;height:4px;background:#000;border-radius:2.0px"></div><div class="w" style="left:1320px;top:449px;width:322px;height:251px;"></div><div style="left:1321px;top:450px;width:320px;height:22px;background:#c0c0c0"><div class="t" style="left:6px;top:6.0px;color:#fff;letter-spacing:-.4px">Address List</div></div><div style="left:1321px;top:472px;width:320px;height:1px;background:#fff"></div><div style="left:1321px;top:472px;width:1px;height:227px;background:#fff"></div><div style="left:1321px;top:697px;width:320px;height:2px;background:#fff"></div><div style="left:1605px;top:454px;width:15px;height:15px;background:#f0f0f0;border:1px solid #303030"><svg style="left:2px;top:2px" width="9" height="9" viewBox="0 0 9 9"><rect x=".5" y="1" width="8" height="7.5" fill="none" stroke="#000" stroke-width="1"/><path d="M0 1h9" stroke="#000" stroke-width="2"/></svg></div><div style="left:1622px;top:454px;width:15px;height:15px;background:#f0f0f0;border:1px solid #303030"><svg style="left:3px;top:3px" width="7" height="7" viewBox="0 0 7 7"><path d="M.5 .5l6 6M6.5 .5l-6 6" stroke="#000" stroke-width="2"/></svg></div><div class="b" style="left:1323px;top:476px;width:22px;height:22px;"><svg style="left:4px;top:4px" width="12" height="12" viewBox="0 0 12 12"><g shape-rendering="crispEdges"><path d="M4 0h4v4h4v4h-4v4h-4v-4h-4v-4h4z" fill="#000078"/><path d="M5 1h2v4h4v2h-4v4h-2v-4h-4v-2h4z" fill="#0c0cf0"/></g></svg></div><div class="b" style="left:1348px;top:476px;width:22px;height:22px;"><svg style="left:4px;top:8px" width="12" height="4" viewBox="0 0 12 4"><rect x=".5" y=".5" width="11" height="3" fill="#e8e8e8" stroke="#b4b4b4"/></svg></div><div class="b" style="left:1378px;top:476px;width:22px;height:22px;"><svg style="left:4px;top:5px" width="12" height="11" viewBox="0 0 12 11"><path d="M.8 5.8l1.8-1.8 2.2 2.2L9.8 1l1.6 1.6-6.6 7.2z" fill="#f8f8f8" stroke="#a8a8a8" stroke-width=".9"/></svg></div><div class="b" style="left:1403px;top:476px;width:22px;height:22px;"><svg style="left:4.5px;top:4.5px" width="11" height="11" viewBox="0 0 11 11"><path d="M2 .5L5.5 4 9 .5 10.5 2 7 5.5 10.5 9 9 10.5 5.5 7 2 10.5 .5 9 4 5.5 .5 2z" fill="#f8f8f8" stroke="#a8a8a8" stroke-width=".9"/></svg></div><div class="b" style="left:1433px;top:476px;width:22px;height:22px;"><svg style="left:3.5px;top:4.5px" width="13" height="10" viewBox="0 0 13 10"><path d="M3.5 .5h9v9h-12v-6z" fill="#f6f6f6" stroke="#a8a8a8"/><path d="M.5 3.5h3v-3" fill="none" stroke="#a8a8a8"/><path d="M6 3.5h2M9 3.5h2M6 5.5h2" stroke="#a8a8a8"/></svg></div><div class="b" style="left:1463px;top:476px;width:22px;height:22px;"><svg style="left:4px;top:4px" width="12" height="12" viewBox="0 0 12 12"><path d="M.7 .8h10.6L7.2 5.6v5.6H4.8V5.6z" fill="#a8c4ee" stroke="#101010" stroke-width="1.1"/></svg></div><div class="fi" style="left:1576px;top:478px;width:60px;height:17px;color:#a0a0a0;font-style:italic">Find</div><div class="tb" style="left:1323px;top:501px;width:314px;height:162px;"><div class="h" style="left:0px;top:0;width:27px;height:17px;"></div><div class="h" style="left:27px;top:0;width:124px;height:17px;">Address<svg style="left:113px;top:4px" width="6" height="6" viewBox="0 0 6 6"><path d="M.5 5.5L3 .5" fill="none" stroke="#909090"/><path d="M3 .5l2.5 5h-5" fill="none" stroke="#fff"/></svg></div><div class="h" style="left:151px;top:0;width:93px;height:17px;">Network</div><div class="h" style="left:244px;top:0;width:54px;height:17px;">Interface</div><div class="h" style="left:298px;top:0;width:14px;height:17px;padding:0"><svg style="left:2.5px;top:5px" width="9" height="5" viewBox="0 0 9 5"><path d="M0 0h9L4.5 5z" fill="#000"/></svg></div><div class="row" style="top:17px;width:312px"><div class="vl" style="left:26px;height:14px;background:#e3e3e3"></div><div class="vl" style="left:150px;height:14px;background:#e3e3e3"></div><div class="vl" style="left:243px;height:14px;background:#e3e3e3"></div><svg style="left:29px;top:1px" width="13" height="12" viewBox="0 0 13 12"><rect x="4.6" y=".5" width="3.6" height="11" rx="1.4" fill="#b0b8b0"/><rect x=".5" y="3.4" width="12" height="4.6" rx="2.2" fill="#f0e010" stroke="#b0a000" stroke-width=".7"/></svg><div class="t n" style="left:45px;top:0;max-width:105px;overflow:hidden;">10.10.10.3/24</div><div class="t n" style="left:153px;top:0;max-width:90px;overflow:hidden;">10.10.10.0</div><div class="t" style="left:246px;top:0;max-width:51px;overflow:hidden;">ether1</div><div class="t" style="left:2px;top:0;max-width:24px;overflow:hidden;">D</div></div><div class="row" style="top:32px;width:312px"><div class="vl" style="left:26px;height:14px;background:#e3e3e3"></div><div class="vl" style="left:150px;height:14px;background:#e3e3e3"></div><div class="vl" style="left:243px;height:14px;background:#e3e3e3"></div><svg style="left:29px;top:1px" width="13" height="12" viewBox="0 0 13 12"><rect x="4.6" y=".5" width="3.6" height="11" rx="1.4" fill="#b0b8b0"/><rect x=".5" y="3.4" width="12" height="4.6" rx="2.2" fill="#f0e010" stroke="#b0a000" stroke-width=".7"/></svg><div class="t n" style="left:45px;top:0;max-width:105px;overflow:hidden;">10.199.1.1/24</div><div class="t n" style="left:153px;top:0;max-width:90px;overflow:hidden;">10.199.1.0</div><div class="t" style="left:246px;top:0;max-width:51px;overflow:hidden;">bridge2</div></div><div class="row" style="top:47px;width:312px"><div class="t" style="left:16px;top:0">;;; bck</div></div><div class="row" style="top:62px;width:312px"><div class="vl" style="left:26px;height:14px;background:#e3e3e3"></div><div class="vl" style="left:150px;height:14px;background:#e3e3e3"></div><div class="vl" style="left:243px;height:14px;background:#e3e3e3"></div><svg style="left:29px;top:1px" width="13" height="12" viewBox="0 0 13 12"><rect x="4.6" y=".5" width="3.6" height="11" rx="1.4" fill="#b0b8b0"/><rect x=".5" y="3.4" width="12" height="4.6" rx="2.2" fill="#f0e010" stroke="#b0a000" stroke-width=".7"/></svg><div class="t n" style="left:45px;top:0;max-width:105px;overflow:hidden;">172.16.1.1/24</div><div class="t n" style="left:153px;top:0;max-width:90px;overflow:hidden;">172.16.1.0</div><div class="t" style="left:246px;top:0;max-width:51px;overflow:hidden;font-style:italic">ether5</div></div><div class="row" style="top:77px;width:312px"><div class="vl" style="left:26px;height:14px;background:#e3e3e3"></div><div class="vl" style="left:150px;height:14px;background:#e3e3e3"></div><div class="vl" style="left:243px;height:14px;background:#e3e3e3"></div><svg style="left:29px;top:1px" width="13" height="12" viewBox="0 0 13 12"><rect x="4.6" y=".5" width="3.6" height="11" rx="1.4" fill="#b0b8b0"/><rect x=".5" y="3.4" width="12" height="4.6" rx="2.2" fill="#f0e010" stroke="#b0a000" stroke-width=".7"/></svg><div class="t n" style="left:45px;top:0;max-width:105px;overflow:hidden;">172.16.10.1/24</div><div class="t n" style="left:153px;top:0;max-width:90px;overflow:hidden;">172.16.10.0</div><div class="t" style="left:246px;top:0;max-width:51px;overflow:hidden;">vlan10</div></div><div class="row" style="top:92px;width:312px"><div class="vl" style="left:26px;height:14px;background:#e3e3e3"></div><div class="vl" style="left:150px;height:14px;background:#e3e3e3"></div><div class="vl" style="left:243px;height:14px;background:#e3e3e3"></div><svg style="left:29px;top:1px" width="13" height="12" viewBox="0 0 13 12"><rect x="4.6" y=".5" width="3.6" height="11" rx="1.4" fill="#b0b8b0"/><rect x=".5" y="3.4" width="12" height="4.6" rx="2.2" fill="#f0e010" stroke="#b0a000" stroke-width=".7"/></svg><div class="t n" style="left:45px;top:0;max-width:105px;overflow:hidden;">172.16.20.1/24</div><div class="t n" style="left:153px;top:0;max-width:90px;overflow:hidden;">172.16.20.0</div><div class="t" style="left:246px;top:0;max-width:51px;overflow:hidden;">vlan20</div></div><div class="row" style="top:107px;width:312px"><div class="vl" style="left:26px;height:14px;background:#e3e3e3"></div><div class="vl" style="left:150px;height:14px;background:#e3e3e3"></div><div class="vl" style="left:243px;height:14px;background:#e3e3e3"></div><svg style="left:29px;top:1px" width="13" height="12" viewBox="0 0 13 12"><rect x="4.6" y=".5" width="3.6" height="11" rx="1.4" fill="#b0b8b0"/><rect x=".5" y="3.4" width="12" height="4.6" rx="2.2" fill="#f0e010" stroke="#b0a000" stroke-width=".7"/></svg><div class="t n" style="left:45px;top:0;max-width:105px;overflow:hidden;">172.16.30.1/24</div><div class="t n" style="left:153px;top:0;max-width:90px;overflow:hidden;">172.16.30.0</div><div class="t" style="left:246px;top:0;max-width:51px;overflow:hidden;">vlan30</div></div><div class="row" style="top:122px;width:312px"><div class="t" style="left:16px;top:0">;;; defconf</div></div><div class="row" style="top:137px;width:312px"><div class="vl" style="left:26px;height:14px;background:#e3e3e3"></div><div class="vl" style="left:150px;height:14px;background:#e3e3e3"></div><div class="vl" style="left:243px;height:14px;background:#e3e3e3"></div><svg style="left:29px;top:1px" width="13" height="12" viewBox="0 0 13 12"><rect x="4.6" y=".5" width="3.6" height="11" rx="1.4" fill="#b0b8b0"/><rect x=".5" y="3.4" width="12" height="4.6" rx="2.2" fill="#f0e010" stroke="#b0a000" stroke-width=".7"/></svg><div class="t n" style="left:45px;top:0;max-width:105px;overflow:hidden;">192.168.88.1/24</div><div class="t n" style="left:153px;top:0;max-width:90px;overflow:hidden;">192.168.88.0</div><div class="t" style="left:246px;top:0;max-width:51px;overflow:hidden;">bridge1</div></div></div><div style="left:1323px;top:662px;width:314px;height:16px;"><div style="left:0px;top:0px;width:314px;height:16px;background:#d8d8d8;border:1px solid #a0a0a0"></div><div style="left:0px;top:0px;width:16px;height:16px;background:#f0f0f0;border:1px solid #a0a0a0"><svg style="left:4px;top:4px" width="7" height="8" viewBox="0 0 7 8"><path d="M0 4L4 0v2.5h2.5v3H4V8z" fill="#000"/></svg></div><div style="left:298px;top:0px;width:16px;height:16px;background:#f0f0f0;border:1px solid #a0a0a0"><svg style="left:4px;top:4px" width="7" height="8" viewBox="0 0 7 8"><path d="M7 4L3 0v2.5H.5v3H3V8z" fill="#000"/></svg></div><div style="left:16px;top:0px;width:259px;height:16px;background:#f0f0f0;border:1px solid #a0a0a0;border-left:0;box-shadow:inset 1px 1px 0 #fff"></div></div><div style="left:1323px;top:678px;width:314px;height:25px;border:1px solid #a0a0a0;border-top:0"></div><div class="t" style="left:1327px;top:680px;">7 items</div><div style="left:1327px;top:472px;width:70px;height:4px;background:#000;border-radius:2.0px"></div><div class="w" style="left:1223px;top:261px;width:551px;height:196px;"></div><div style="left:1224px;top:262px;width:549px;height:22px;background:#c0c0c0"><div class="t" style="left:5px;top:5.5px;color:#fff;letter-spacing:-.4px">Bridge</div></div><div style="left:1224px;top:284px;width:549px;height:1px;background:#fff"></div><div style="left:1224px;top:284px;width:1px;height:172px;background:#fff"></div><div style="left:1224px;top:454px;width:549px;height:2px;background:#fff"></div><div style="left:1737px;top:266px;width:15px;height:15px;background:#f0f0f0;border:1px solid #303030"><svg style="left:2px;top:2px" width="9" height="9" viewBox="0 0 9 9"><rect x=".5" y="1" width="8" height="7.5" fill="none" stroke="#000" stroke-width="1"/><path d="M0 1h9" stroke="#000" stroke-width="2"/></svg></div><div style="left:1754px;top:266px;width:15px;height:15px;background:#f0f0f0;border:1px solid #303030"><svg style="left:3px;top:3px" width="7" height="7" viewBox="0 0 7 7"><path d="M.5 .5l6 6M6.5 .5l-6 6" stroke="#000" stroke-width="2"/></svg></div><div class="tabA" style="left:1229px;top:285px;width:45px;height:27px">Bridge</div><div class="tab" style="left:1275px;top:289px;width:36px;height:22px;line-height:22px">Ports</div><div class="tab" style="left:1312px;top:289px;width:86px;height:22px;line-height:22px">Port Extensions</div><div class="tab" style="left:1399px;top:289px;width:46px;height:22px;line-height:22px">VLANs</div><div class="tab" style="left:1446px;top:289px;width:44px;height:22px;line-height:22px">MSTIs</div><div class="tab" style="left:1491px;top:289px;width:106px;height:22px;line-height:22px">Port MST Overrides</div><div class="tab" style="left:1598px;top:289px;width:91px;height:22px;line-height:22px">MVRP Attributes</div><div class="tab" style="left:1690px;top:289px;width:40px;height:22px;line-height:22px">Filters</div><div class="tab" style="left:1731px;top:289px;width:22px;height:22px;line-height:22px">...</div><div class="b" style="left:1228px;top:315px;width:22px;height:22px;"><svg style="left:4px;top:4px" width="12" height="12" viewBox="0 0 12 12"><g shape-rendering="crispEdges"><path d="M4 0h4v4h4v4h-4v4h-4v-4h-4v-4h4z" fill="#000078"/><path d="M5 1h2v4h4v2h-4v4h-2v-4h-4v-2h4z" fill="#0c0cf0"/></g></svg></div><div class="b" style="left:1253px;top:315px;width:22px;height:22px;"><svg style="left:4px;top:8px" width="12" height="4" viewBox="0 0 12 4"><rect x=".5" y=".5" width="11" height="3" fill="#c02020" stroke="#500000"/></svg></div><div class="b" style="left:1283px;top:315px;width:22px;height:22px;"><svg style="left:4px;top:5px" width="12" height="11" viewBox="0 0 12 11"><path d="M.3 6.2l2.3-2.3 2 2.2L9.9.3l1.9 2-7.1 8.3z" fill="#0a0ad0" stroke="#000070" stroke-width=".6"/></svg></div><div class="b" style="left:1308px;top:315px;width:22px;height:22px;"><svg style="left:4.5px;top:4.5px" width="11" height="11" viewBox="0 0 11 11"><path d="M2.3 0L5.5 3.2 8.7 0 11 2.3 7.8 5.5 11 8.7 8.7 11 5.5 7.8 2.3 11 0 8.7 3.2 5.5 0 2.3z" fill="#e81010" stroke="#800000" stroke-width=".6"/></svg></div><div class="b" style="left:1338px;top:315px;width:22px;height:22px;"><svg style="left:3px;top:5px" width="13" height="10" viewBox="0 0 13 10"><path d="M3.5 .5h9v9h-12v-6z" fill="#ffee20" stroke="#000"/><path d="M.5 3.5h3v-3" fill="none" stroke="#000" stroke-width=".8"/></svg></div><div class="b" style="left:1368px;top:315px;width:22px;height:22px;"><svg style="left:4px;top:4px" width="12" height="12" viewBox="0 0 12 12"><path d="M.7 .8h10.6L7.2 5.6v5.6H4.8V5.6z" fill="#a8c4ee" stroke="#101010" stroke-width="1.1"/></svg></div><div class="b" style="left:1398px;top:315px;width:55px;height:22px;"><div class="t" style="left:0;width:53px;top:3px;text-align:center">Settings</div></div><div class="fi" style="left:1706px;top:318px;width:60px;height:17px;color:#a0a0a0;font-style:italic">Find</div><div class="tb" style="left:1228px;top:341px;width:539px;height:76px;"><div class="h" style="left:0px;top:0;width:48px;height:17px;"></div><div class="h" style="left:48px;top:0;width:100px;height:17px;">Name<svg style="left:89px;top:4px" width="6" height="6" viewBox="0 0 6 6"><path d="M.5 5.5L3 .5" fill="none" stroke="#909090"/><path d="M3 .5l2.5 5h-5" fill="none" stroke="#fff"/></svg></div><div class="h" style="left:148px;top:0;width:120px;height:17px;">Type</div><div class="h" style="left:268px;top:0;width:50px;height:17px;">L2 MTU</div><div class="h" style="left:318px;top:0;width:115px;height:17px;">MAC Address</div><div class="h" style="left:433px;top:0;width:50px;height:17px;">Protoco...</div><div class="h" style="left:483px;top:0;width:40px;height:17px;">Tx</div><div class="h" style="left:523px;top:0;width:14px;height:17px;padding:0"><svg style="left:2.5px;top:5px" width="9" height="5" viewBox="0 0 9 5"><path d="M0 0h9L4.5 5z" fill="#000"/></svg></div><div class="row sel" style="top:17px;width:537px"><div class="t" style="left:16px;top:0">;;; defconf</div></div><div class="row sel" style="top:32px;width:537px"><div class="vl" style="left:47px;height:14px;background:#c4d8f2"></div><div class="vl" style="left:147px;height:14px;background:#c4d8f2"></div><div class="vl" style="left:267px;height:14px;background:#c4d8f2"></div><div class="vl" style="left:317px;height:14px;background:#c4d8f2"></div><div class="vl" style="left:432px;height:14px;background:#c4d8f2"></div><div class="vl" style="left:482px;height:14px;background:#c4d8f2"></div><div class="vl" style="left:522px;height:14px;background:#c4d8f2"></div><div class="t" style="left:2px;top:0;max-width:45px;overflow:hidden;">R</div><svg style="left:50px;top:2px" width="13" height="10" viewBox="0 0 13 10"><circle cx="4" cy="3" r="2.4" fill="#4890d0"/><circle cx="9" cy="3" r="2.4" fill="#3878b8"/><path d="M.5 10c0-6 7-6 7 0zM5.5 10c0-6 7-6 7 0z" fill="#4890d0"/></svg><div class="t" style="left:66px;top:0;max-width:81px;overflow:hidden;">bridge1</div><div class="t" style="left:150px;top:0;max-width:117px;overflow:hidden;">Bridge</div><div class="t n r" style="left:268px;width:47px;top:0;margin-left:-2px">1598</div><div class="t" style="left:320px;top:0;max-width:112px;overflow:hidden;">CC:2D:E0:2B:2A:9D</div><div class="t" style="left:435px;top:0;max-width:47px;overflow:hidden;">RSTP</div></div><div class="row" style="top:47px;width:537px"><div class="vl" style="left:47px;height:14px;background:#e3e3e3"></div><div class="vl" style="left:147px;height:14px;background:#e3e3e3"></div><div class="vl" style="left:267px;height:14px;background:#e3e3e3"></div><div class="vl" style="left:317px;height:14px;background:#e3e3e3"></div><div class="vl" style="left:432px;height:14px;background:#e3e3e3"></div><div class="vl" style="left:482px;height:14px;background:#e3e3e3"></div><div class="vl" style="left:522px;height:14px;background:#e3e3e3"></div><div class="t" style="left:2px;top:0;max-width:45px;overflow:hidden;">R</div><svg style="left:50px;top:2px" width="13" height="10" viewBox="0 0 13 10"><circle cx="4" cy="3" r="2.4" fill="#4890d0"/><circle cx="9" cy="3" r="2.4" fill="#3878b8"/><path d="M.5 10c0-6 7-6 7 0zM5.5 10c0-6 7-6 7 0z" fill="#4890d0"/></svg><div class="t" style="left:66px;top:0;max-width:81px;overflow:hidden;">bridge2</div><div class="t" style="left:150px;top:0;max-width:117px;overflow:hidden;">Bridge</div><div class="t n r" style="left:268px;width:47px;top:0;margin-left:-2px">65535</div><div class="t" style="left:320px;top:0;max-width:112px;overflow:hidden;">EE:BD:94:AC:2B:0F</div><div class="t" style="left:435px;top:0;max-width:47px;overflow:hidden;">RSTP</div></div></div><div style="left:1228px;top:416px;width:539px;height:16px;"><div style="left:0px;top:0px;width:539px;height:16px;background:#d8d8d8;border:1px solid #a0a0a0"></div><div style="left:0px;top:0px;width:16px;height:16px;background:#f0f0f0;border:1px solid #a0a0a0"><svg style="left:4px;top:4px" width="7" height="8" viewBox="0 0 7 8"><path d="M0 4L4 0v2.5h2.5v3H4V8z" fill="#000"/></svg></div><div style="left:523px;top:0px;width:16px;height:16px;background:#f0f0f0;border:1px solid #a0a0a0"><svg style="left:4px;top:4px" width="7" height="8" viewBox="0 0 7 8"><path d="M7 4L3 0v2.5H.5v3H3V8z" fill="#000"/></svg></div><div style="left:16px;top:0px;width:186px;height:16px;background:#f0f0f0;border:1px solid #a0a0a0;border-left:0;box-shadow:inset 1px 1px 0 #fff"></div></div><div style="left:1228px;top:432px;width:539px;height:21px;border:1px solid #a0a0a0;border-top:0"></div><div class="t" style="left:1231px;top:434px;">2 items out of 14 (1 selected)</div><div style="left:1230px;top:311px;width:37px;height:4px;background:#000;border-radius:2.0px"></div><div class="w" style="left:1308px;top:700px;width:418px;height:253px;"></div><div style="left:1309px;top:701px;width:416px;height:22px;background:#c0c0c0"><div class="t" style="left:5px;top:5.5px;color:#fff;letter-spacing:-.4px">DHCP Server</div></div><div style="left:1309px;top:723px;width:416px;height:1px;background:#fff"></div><div style="left:1309px;top:723px;width:1px;height:229px;background:#fff"></div><div style="left:1309px;top:950px;width:416px;height:2px;background:#fff"></div><div style="left:1689px;top:705px;width:15px;height:15px;background:#f0f0f0;border:1px solid #303030"><svg style="left:2px;top:2px" width="9" height="9" viewBox="0 0 9 9"><rect x=".5" y="1" width="8" height="7.5" fill="none" stroke="#000" stroke-width="1"/><path d="M0 1h9" stroke="#000" stroke-width="2"/></svg></div><div style="left:1706px;top:705px;width:15px;height:15px;background:#f0f0f0;border:1px solid #303030"><svg style="left:3px;top:3px" width="7" height="7" viewBox="0 0 7 7"><path d="M.5 .5l6 6M6.5 .5l-6 6" stroke="#000" stroke-width="2"/></svg></div><div class="tab" style="left:1315px;top:729px;width:42px;height:21px;line-height:21px">DHCP</div><div class="tabA" style="left:1358px;top:725px;width:59px;height:26px">Networks</div><div class="tab" style="left:1419px;top:729px;width:45px;height:21px;line-height:21px">Leases</div><div class="tab" style="left:1466px;top:729px;width:48px;height:21px;line-height:21px">Options</div><div class="tab" style="left:1516px;top:729px;width:67px;height:21px;line-height:21px">Option Sets</div><div class="tab" style="left:1585px;top:729px;width:86px;height:21px;line-height:21px">Option Matcher</div><div class="tab" style="left:1672px;top:729px;width:38px;height:21px;line-height:21px">Alerts</div><div class="b" style="left:1313px;top:755px;width:22px;height:22px;"><svg style="left:4px;top:4px" width="12" height="12" viewBox="0 0 12 12"><g shape-rendering="crispEdges"><path d="M4 0h4v4h4v4h-4v4h-4v-4h-4v-4h4z" fill="#000078"/><path d="M5 1h2v4h4v2h-4v4h-2v-4h-4v-2h4z" fill="#0c0cf0"/></g></svg></div><div class="b" style="left:1338px;top:755px;width:22px;height:22px;"><svg style="left:4px;top:8px" width="12" height="4" viewBox="0 0 12 4"><rect x=".5" y=".5" width="11" height="3" fill="#c02020" stroke="#500000"/></svg></div><div class="b" style="left:1368px;top:755px;width:22px;height:22px;"><svg style="left:3px;top:5px" width="13" height="10" viewBox="0 0 13 10"><path d="M3.5 .5h9v9h-12v-6z" fill="#ffee20" stroke="#000"/><path d="M.5 3.5h3v-3" fill="none" stroke="#000" stroke-width=".8"/></svg></div><div class="b" style="left:1398px;top:755px;width:22px;height:22px;"><svg style="left:4px;top:4px" width="12" height="12" viewBox="0 0 12 12"><path d="M.7 .8h10.6L7.2 5.6v5.6H4.8V5.6z" fill="#a8c4ee" stroke="#101010" stroke-width="1.1"/></svg></div><div class="fi" style="left:1659px;top:757px;width:60px;height:17px;color:#a0a0a0;font-style:italic">Find</div><div class="tb" style="left:1313px;top:780px;width:407px;height:133px;"><div class="h" style="left:0px;top:0;width:130px;height:17px;">Address<svg style="left:119px;top:4px" width="6" height="6" viewBox="0 0 6 6"><path d="M.5 5.5L3 .5" fill="none" stroke="#909090"/><path d="M3 .5l2.5 5h-5" fill="none" stroke="#fff"/></svg></div><div class="h" style="left:130px;top:0;width:100px;height:17px;">Gateway</div><div class="h" style="left:230px;top:0;width:100px;height:17px;">DNS Servers</div><div class="h" style="left:330px;top:0;width:61px;height:17px;">Domain</div><div class="h" style="left:391px;top:0;width:14px;height:17px;padding:0"><svg style="left:2.5px;top:5px" width="9" height="5" viewBox="0 0 9 5"><path d="M0 0h9L4.5 5z" fill="#000"/></svg></div><div class="row sel" style="top:17px;width:405px"><div class="t" style="left:15px;top:0">;;; VPN</div></div><div class="row sel" style="top:32px;width:405px"><div class="vl" style="left:129px;height:14px;background:#c4d8f2"></div><div class="vl" style="left:229px;height:14px;background:#c4d8f2"></div><div class="vl" style="left:329px;height:14px;background:#c4d8f2"></div><div class="vl" style="left:399px;height:14px;background:#c4d8f2"></div><div class="t n" style="left:2px;top:0;max-width:127px;overflow:hidden;">10.199.1.0/24</div><div class="t n" style="left:132px;top:0;max-width:97px;overflow:hidden;">10.199.1.1</div><div class="t n" style="left:232px;top:0;max-width:97px;overflow:hidden;">10.199.1.1</div></div><div class="row" style="top:47px;width:405px"><div class="vl" style="left:129px;height:14px;background:#e3e3e3"></div><div class="vl" style="left:229px;height:14px;background:#e3e3e3"></div><div class="vl" style="left:329px;height:14px;background:#e3e3e3"></div><div class="vl" style="left:399px;height:14px;background:#e3e3e3"></div><div class="t n" style="left:2px;top:0;max-width:127px;overflow:hidden;">172.16.10.0/24</div><div class="t n" style="left:132px;top:0;max-width:97px;overflow:hidden;">172.16.10.1</div><div class="t n" style="left:232px;top:0;max-width:97px;overflow:hidden;">172.16.10.1</div></div><div class="row" style="top:62px;width:405px"><div class="vl" style="left:129px;height:14px;background:#e3e3e3"></div><div class="vl" style="left:229px;height:14px;background:#e3e3e3"></div><div class="vl" style="left:329px;height:14px;background:#e3e3e3"></div><div class="vl" style="left:399px;height:14px;background:#e3e3e3"></div><div class="t n" style="left:2px;top:0;max-width:127px;overflow:hidden;">172.16.20.0/24</div><div class="t n" style="left:132px;top:0;max-width:97px;overflow:hidden;">172.16.20.1</div><div class="t n" style="left:232px;top:0;max-width:97px;overflow:hidden;">172.16.20.1</div></div><div class="row" style="top:77px;width:405px"><div class="vl" style="left:129px;height:14px;background:#e3e3e3"></div><div class="vl" style="left:229px;height:14px;background:#e3e3e3"></div><div class="vl" style="left:329px;height:14px;background:#e3e3e3"></div><div class="vl" style="left:399px;height:14px;background:#e3e3e3"></div><div class="t n" style="left:2px;top:0;max-width:127px;overflow:hidden;">172.16.30.0/24</div><div class="t n" style="left:132px;top:0;max-width:97px;overflow:hidden;">172.16.30.1</div><div class="t n" style="left:232px;top:0;max-width:97px;overflow:hidden;">172.16.30.1</div></div><div class="row" style="top:92px;width:405px"><div class="t" style="left:15px;top:0">;;; defconf</div></div><div class="row" style="top:107px;width:405px"><div class="vl" style="left:129px;height:14px;background:#e3e3e3"></div><div class="vl" style="left:229px;height:14px;background:#e3e3e3"></div><div class="vl" style="left:329px;height:14px;background:#e3e3e3"></div><div class="vl" style="left:399px;height:14px;background:#e3e3e3"></div><div class="t n" style="left:2px;top:0;max-width:127px;overflow:hidden;">192.168.88.0/24</div><div class="t n" style="left:132px;top:0;max-width:97px;overflow:hidden;">192.168.88.1</div><div class="t n" style="left:232px;top:0;max-width:97px;overflow:hidden;">192.168.88.1</div></div></div><div style="left:1313px;top:912px;width:407px;height:16px;"><div style="left:0px;top:0px;width:407px;height:16px;background:#d8d8d8;border:1px solid #a0a0a0"></div><div style="left:0px;top:0px;width:16px;height:16px;background:#f0f0f0;border:1px solid #a0a0a0"><svg style="left:4px;top:4px" width="7" height="8" viewBox="0 0 7 8"><path d="M0 4L4 0v2.5h2.5v3H4V8z" fill="#000"/></svg></div><div style="left:391px;top:0px;width:16px;height:16px;background:#f0f0f0;border:1px solid #a0a0a0"><svg style="left:4px;top:4px" width="7" height="8" viewBox="0 0 7 8"><path d="M7 4L3 0v2.5H.5v3H3V8z" fill="#000"/></svg></div><div style="left:16px;top:0px;width:239px;height:16px;background:#f0f0f0;border:1px solid #a0a0a0;border-left:0;box-shadow:inset 1px 1px 0 #fff"></div></div><div style="left:1313px;top:928px;width:407px;height:21px;border:1px solid #a0a0a0;border-top:0"></div><div class="t" style="left:1316px;top:930px;">5 items (1 selected)</div><div style="left:1313px;top:721px;width:78px;height:4px;background:#000;border-radius:2.0px"></div><div style="left:1298px;top:163px;width:477px;height:84px;background:#0c0c0c"></div><div style="left:1310.5px;top:169px;font-family:'Liberation Mono',monospace;font-size:15px;line-height:19px;color:#cccccc;white-space:pre;letter-spacing:0;-webkit-text-stroke:.4px #ccc">Connection-specific DNS Suffix  . :</div><div style="left:1310.5px;top:188px;font-family:'Liberation Mono',monospace;font-size:15px;line-height:19px;color:#cccccc;white-space:pre;letter-spacing:0;-webkit-text-stroke:.4px #ccc">IPv4 Address. . . . . . . . . . . : 10.199.1.2</div><div style="left:1310.5px;top:207px;font-family:'Liberation Mono',monospace;font-size:15px;line-height:19px;color:#cccccc;white-space:pre;letter-spacing:0;-webkit-text-stroke:.4px #ccc">Subnet Mask . . . . . . . . . . . : 255.255.255.255</div><div style="left:1310.5px;top:226px;font-family:'Liberation Mono',monospace;font-size:15px;line-height:19px;color:#cccccc;white-space:pre;letter-spacing:0;-webkit-text-stroke:.4px #ccc">Default Gateway . . . . . . . . . : 0.0.0.0</div></div><div style="left:1589px;top:0px;width:238px;height:163px;background:#f9f9f9;overflow:hidden"><div style="left:0px;top:0px;width:5px;height:163px;background:#ececec"></div><div class="d" style="left:20px;top:-7.4px;transform:scaleX(.92)">This checkbox only applies when you are connected to a local</div><div class="d" style="left:20px;top:5.7px;transform:scaleX(.92)">network and a dial-up network simultaneously. When selected, data</div><div class="d" style="left:20px;top:18.8px;transform:scaleX(.92)">that cannot be sent on the local network is forwarded to the dial-up</div><div class="d" style="left:20px;top:31.9px;transform:scaleX(.92)">network.</div><div style="left:20px;top:80px;width:220px;height:43px;border:1px solid #dcdcdc;border-right:0"></div><div style="left:29px;top:74px;width:212px;height:14px;background:#f9f9f9"></div><div style="left:20px;top:142px;width:220px;height:30px;border:1px solid #dcdcdc;border-right:0"></div><div style="left:27px;top:136px;width:102px;height:14px;background:#f9f9f9"></div><div style="left:30px;top:75px;width:13px;height:13px;background:#0a64c0;border-radius:3px"><svg style="left:3px;top:3.5px" width="8" height="6" viewBox="0 0 8 6"><path d="M.5 3l2.2 2.2L7.5 .5" fill="none" stroke="#fff" stroke-width="1.1"/></svg></div><div class="d" style="left:47px;top:73px;transform:scaleX(.91)">Use default gateway on remote network</div><div style="left:35px;top:99px;width:12px;height:12px;background:#fbfbfb;border:1px solid #cfcfcf;border-radius:3px"></div><div class="d" style="left:51.5px;top:97px;color:#a0a0a0;transform:scaleX(.905)">Disable class based route addition</div><div style="left:29px;top:137px;width:13px;height:13px;background:#0a64c0;border-radius:3px"><svg style="left:3px;top:3.5px" width="8" height="6" viewBox="0 0 8 6"><path d="M.5 3l2.2 2.2L7.5 .5" fill="none" stroke="#fff" stroke-width="1.1"/></svg></div><div class="d" style="left:45px;top:135px;transform:scaleX(.905)">Automatic metric</div><div class="d" style="left:32px;top:157px;color:#b0b0b0;transform:scaleX(.92)">Interface metric:</div><div style="left:129px;top:154px;width:75px;height:12px;background:#fbfbfb;border:1px solid #e4e4e4;border-radius:3px"></div></div><svg style="left:0;top:0" width="1885" height="991" viewBox="0 0 1885 991"><path d="M1591 49.5 L1742 48.5" stroke="#e81c24" stroke-width="5" stroke-linecap="round" fill="none"/><path d="M1583.5 52 L1556.5 168" stroke="#e81c24" stroke-width="4.5" stroke-linecap="round" fill="none"/><path d="M1544.5 140.5 L1556.5 168 L1587.5 148" stroke="#e81c24" stroke-width="4" stroke-linecap="round" stroke-linejoin="round" fill="none"/><path d="M1632 60 C1622 56.5 1610 56 1603 58.5 C1594 61.5 1591 70 1591 80 C1591 89 1594 96 1602 99.5 C1612 103 1628 102 1637 98 C1641 96 1643 94 1644 91.5" stroke="#e81c24" stroke-width="3.8" stroke-linecap="round" fill="none"/><path d="M1839.5 74 L1840.5 245" stroke="#e81c24" stroke-width="4.5" stroke-linecap="round" fill="none"/><path d="M1752 250.3 L1836 248.3" stroke="#e81c24" stroke-width="4.6" stroke-linecap="round" fill="none"/></svg></body></html>
